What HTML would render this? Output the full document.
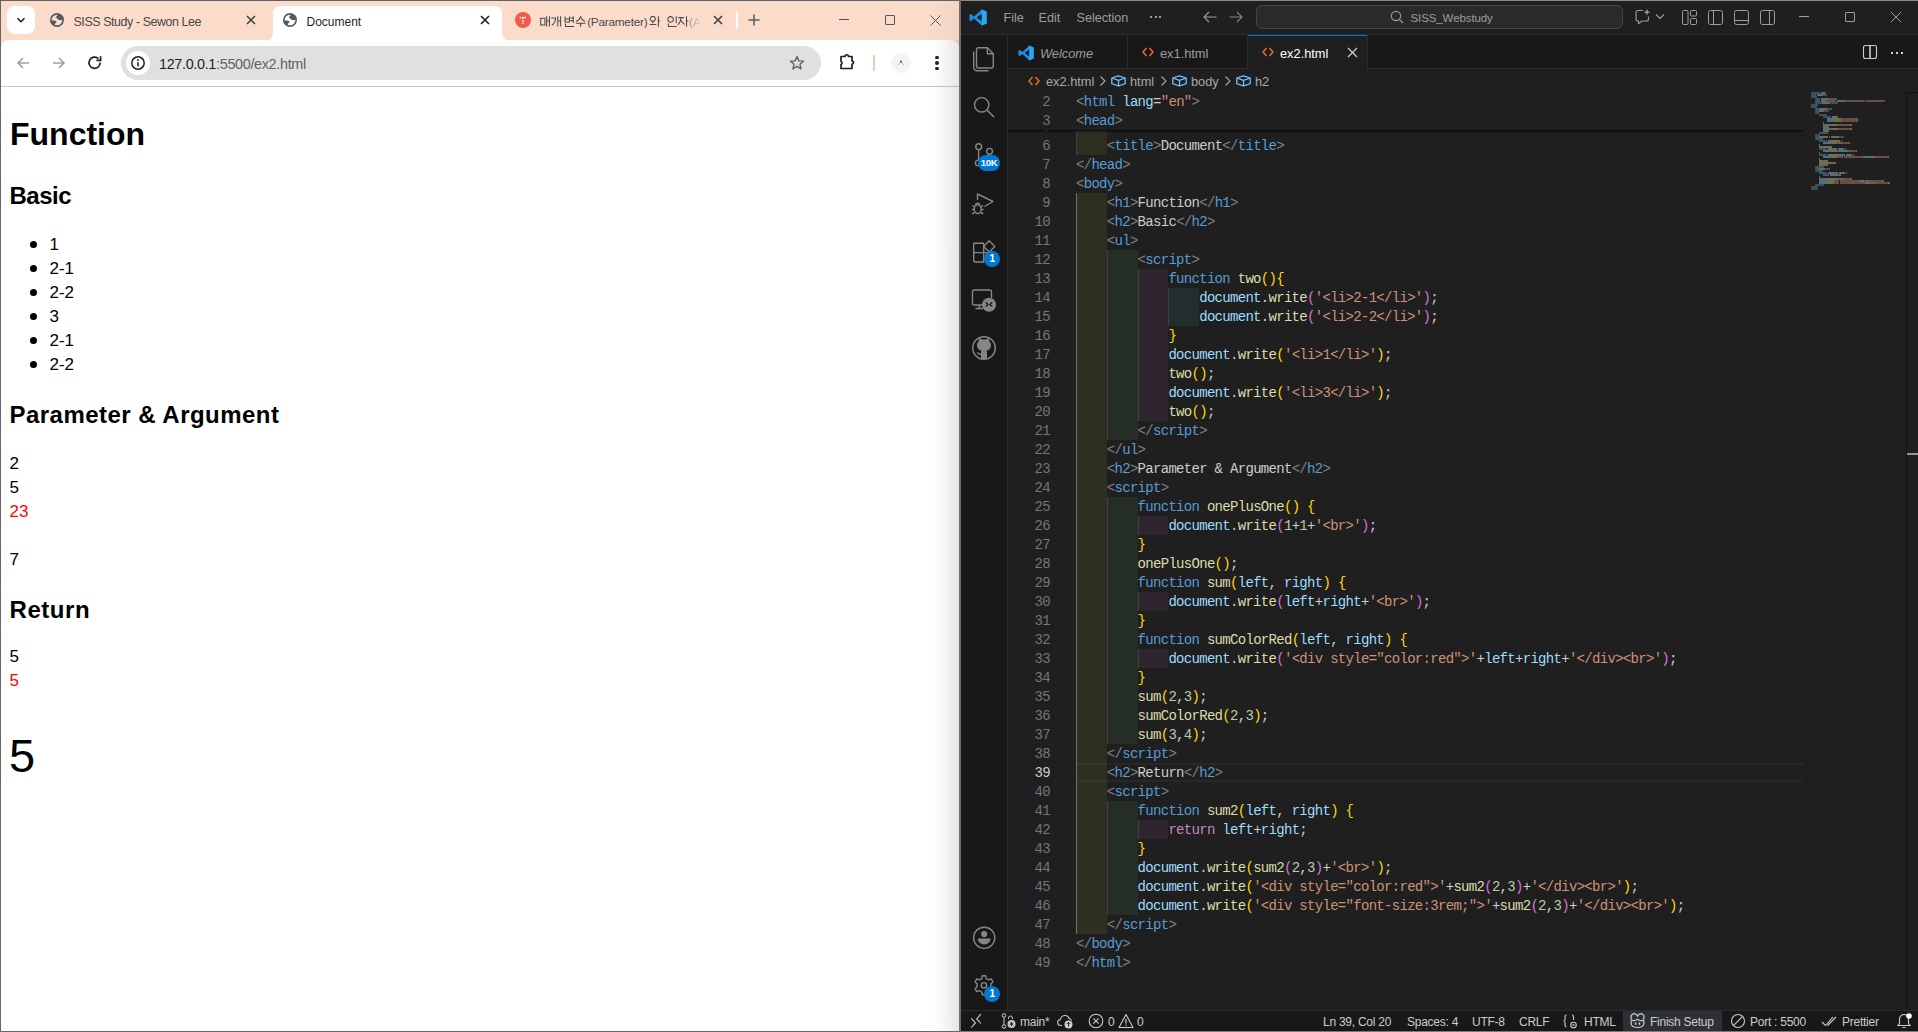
<!DOCTYPE html><html><head><meta charset="utf-8"><title>ex2</title>
<style>
html,body{margin:0;padding:0}
body{width:1918px;height:1032px;position:relative;overflow:hidden;background:#666666;font-family:"Liberation Sans",sans-serif}
.code{position:absolute;left:0;white-space:pre;font-family:"Liberation Mono",monospace;font-size:14px;letter-spacing:-0.7px;height:19px;line-height:19px;padding-top:1px;box-sizing:border-box}
.p{color:#808080}.t{color:#569cd6}.a{color:#9cdcfe}.x{color:#cccccc}.s{color:#ce9178}.k{color:#569cd6}.f{color:#dcdcaa}.v{color:#9cdcfe}.r{color:#c586c0}.n{color:#b5cea8}.y{color:#ffd700}.m{color:#da70d6}
</style></head><body>

<div style="position:absolute;left:1px;top:1px;width:958px;height:60px;background:#fbdccb;"></div>
<div style="position:absolute;left:1px;top:40px;width:958px;height:46px;background:#ffffff;border-radius:8px 8px 0 0"></div>
<div style="position:absolute;left:1px;top:86px;width:958px;height:1px;background:#c8c8c8;"></div>
<div style="position:absolute;left:1px;top:87px;width:958px;height:944px;background:#ffffff;"></div>
<div style="position:absolute;left:7px;top:6px;width:28px;height:28px;background:#ffffff;border-radius:8px"></div>
<svg style="position:absolute;left:15px;top:14px;" width="12" height="12" viewBox="0 0 12 12"><path d="M2.5 4.2 L6 7.7 L9.5 4.2" fill="none" stroke="#1f1f1f" stroke-width="1.6"/></svg>
<svg style="position:absolute;left:49px;top:12px;" width="16" height="16" viewBox="0 0 16 16"><circle cx="8" cy="8" r="6.15" fill="none" stroke="#545b64" stroke-width="1.6"/><path d="M9 2.6 C8 3.6 7 4.6 7.2 5.6 C7.4 6.6 9 7.4 10.3 8 C11.6 8.4 13.2 7.8 14.6 7.4 L14.2 4.6 L11.2 2 Z" fill="#545b64"/><path d="M1.6 8.4 C3.5 8.4 5.5 8.3 6.9 8.9 C7.9 9.4 7.6 10.2 6.6 10.9 C5.9 11.5 5.7 12.4 6 13.8 L2.8 12.2 L1.4 9.8 Z" fill="#545b64"/></svg>
<div style="position:absolute;left:73.5px;top:21.70px;line-height:0;font-family:'Liberation Sans',sans-serif;font-size:12.4px;font-weight:normal;color:#474747;white-space:pre;letter-spacing:-0.4px">SISS Study - Sewon Lee</div>
<svg style="position:absolute;left:246px;top:15px;" width="10" height="10" viewBox="0 0 10 10"><path d="M1 1 L9 9 M9 1 L1 9" stroke="#3c3c3c" stroke-width="1.5"/></svg>
<svg style="position:absolute;left:264px;top:6px" width="247" height="35" viewBox="0 0 247 35"><path d="M0 35 Q9 35 9 26 L9 8 Q9 0 17 0 L230 0 Q238 0 238 8 L238 26 Q238 35 247 35 Z" fill="#ffffff"/></svg>
<svg style="position:absolute;left:282px;top:12px;" width="16" height="16" viewBox="0 0 16 16"><circle cx="8" cy="8" r="6.15" fill="none" stroke="#545b64" stroke-width="1.6"/><path d="M9 2.6 C8 3.6 7 4.6 7.2 5.6 C7.4 6.6 9 7.4 10.3 8 C11.6 8.4 13.2 7.8 14.6 7.4 L14.2 4.6 L11.2 2 Z" fill="#545b64"/><path d="M1.6 8.4 C3.5 8.4 5.5 8.3 6.9 8.9 C7.9 9.4 7.6 10.2 6.6 10.9 C5.9 11.5 5.7 12.4 6 13.8 L2.8 12.2 L1.4 9.8 Z" fill="#545b64"/></svg>
<div style="position:absolute;left:306.5px;top:21.84px;line-height:0;font-family:'Liberation Sans',sans-serif;font-size:12px;font-weight:normal;color:#1f1f1f;white-space:pre;">Document</div>
<svg style="position:absolute;left:480px;top:15px;" width="10" height="10" viewBox="0 0 10 10"><path d="M1 1 L9 9 M9 1 L1 9" stroke="#1f1f1f" stroke-width="1.6"/></svg>
<svg style="position:absolute;left:515px;top:12px;" width="16" height="16" viewBox="0 0 16 16"><circle cx="8" cy="8" r="8" fill="#f25a4b"/><path d="M4.6 5.6 H11.4 M8 5.6 V11.8" stroke="#fff" stroke-width="1.6" stroke-dasharray="1.4 1"/></svg>
<svg style="position:absolute;left:535px;top:16px" width="170" height="12" viewBox="0 0 170 12"><path transform="translate(4.899999999999977 0)" d="M0.8 2.2 H5 V9 H0.8 Z M6.8 0.2 V10.6 M6.8 5 H9.2 M9.6 0.2 V10.6" fill="none" stroke="#4a4a4a" stroke-width="1.05"/><path transform="translate(16 0)" d="M0.4 2 H4.6 C4.6 5 3.4 7.5 0.8 9.2 M6.8 0.2 V10.6 M6.8 5 H9.2 M9.6 0.2 V10.6" fill="none" stroke="#4a4a4a" stroke-width="1.05"/><path transform="translate(29.299999999999955 0)" d="M0.8 0.4 V6 H5.2 V0.4 M0.8 3 H5.2 M9 0.2 V7 M6.2 2 H9 M6.2 4.6 H9 M1.2 7.4 V10.4 H9.8" fill="none" stroke="#4a4a4a" stroke-width="1.05"/><path transform="translate(40.60000000000002 0)" d="M5 0.4 C4.6 2.6 2.8 4.6 0.4 5.4 M5 0.4 C5.4 2.6 7.2 4.6 9.6 5.4 M0.2 7.2 H9.8 M5 7.2 V10.8" fill="none" stroke="#4a4a4a" stroke-width="1.05"/><path transform="translate(114.39999999999998 0)" d="M3.4 2.8 m-2.6 0 a2.6 2.4 0 1 0 5.2 0 a2.6 2.4 0 1 0 -5.2 0 M3.4 5.4 V7.6 M0.2 8.4 H7 M9 0.2 V10.8 M9 5 H10.6" fill="none" stroke="#4a4a4a" stroke-width="1.05"/><path transform="translate(132 0)" d="M3.6 3.4 m-2.8 0 a2.8 2.8 0 1 0 5.6 0 a2.8 2.8 0 1 0 -5.6 0 M9.2 0.2 V7.2 M1.4 7.6 V10.4 H9.8" fill="none" stroke="#4a4a4a" stroke-width="1.05"/><path transform="translate(142.70000000000005 0)" d="M0.6 1.6 H6.2 M3.4 1.6 C3.2 4.6 2 7.2 0.2 9 M3.6 4.4 C4.4 6 5.4 7.4 6.8 8.4 M8.8 0.2 V10.8 M8.8 5 H10.6" fill="none" stroke="#4a4a4a" stroke-width="1.05"/></svg>
<div style="position:absolute;left:587.2px;top:21.51px;line-height:0;font-family:'Liberation Sans',sans-serif;font-size:11.8px;font-weight:normal;color:#4a4a4a;white-space:pre;letter-spacing:-0.25px">(Parameter)</div>
<div style="position:absolute;left:688px;top:13px;width:14px;height:16px;overflow:hidden;-webkit-mask-image:linear-gradient(to right,rgba(0,0,0,0.6),transparent);mask-image:linear-gradient(to right,rgba(0,0,0,0.6),transparent)"><div style="position:absolute;left:1px;top:8.8px;line-height:0;font-size:11.8px;color:#4a4a4a;white-space:pre">(A</div></div>
<svg style="position:absolute;left:713px;top:15px;" width="10" height="10" viewBox="0 0 10 10"><path d="M1 1 L9 9 M9 1 L1 9" stroke="#3c3c3c" stroke-width="1.5"/></svg>
<div style="position:absolute;left:736px;top:12px;width:2px;height:16px;background:#ffffff;"></div>
<svg style="position:absolute;left:748px;top:14px;" width="12" height="12" viewBox="0 0 12 12"><path d="M6 0.5 V11.5 M0.5 6 H11.5" stroke="#5a5a5a" stroke-width="1.5"/></svg>
<div style="position:absolute;left:839px;top:19px;width:10px;height:1px;background:#555555;"></div>
<div style="position:absolute;left:885px;top:15px;width:10px;height:10px;background:transparent;border:1px solid #555555;box-sizing:border-box;border-radius:1px"></div>
<svg style="position:absolute;left:930px;top:15px;" width="11" height="11" viewBox="0 0 11 11"><path d="M0.5 0.5 L10.5 10.5 M10.5 0.5 L0.5 10.5" stroke="#555555" stroke-width="1"/></svg>
<svg style="position:absolute;left:15px;top:55px;" width="16" height="16" viewBox="0 0 16 16"><path d="M14 8 H3 M8 3 L3 8 L8 13" fill="none" stroke="#a0a0a0" stroke-width="1.6"/></svg>
<svg style="position:absolute;left:51px;top:55px;" width="16" height="16" viewBox="0 0 16 16"><path d="M2 8 H13 M8 3 L13 8 L8 13" fill="none" stroke="#a0a0a0" stroke-width="1.6"/></svg>
<svg style="position:absolute;left:87px;top:55px;" width="16" height="16" viewBox="0 0 16 16"><path d="M13.2 7.6 A5.6 5.6 0 1 1 11.4 3.6" fill="none" stroke="#1f1f1f" stroke-width="1.7"/><path d="M13.6 1.2 V5.4 H9.4" fill="none" stroke="#1f1f1f" stroke-width="1.7"/></svg>
<div style="position:absolute;left:121px;top:46px;width:700px;height:34px;background:#e0e0e0;border-radius:17px"></div>
<div style="position:absolute;left:126px;top:51px;width:24px;height:24px;background:#ffffff;border-radius:12px"></div>
<svg style="position:absolute;left:130px;top:55px;" width="16" height="16" viewBox="0 0 16 16"><circle cx="8" cy="8" r="6.2" fill="none" stroke="#1f1f1f" stroke-width="1.5"/><path d="M8 7.2 V11.2" stroke="#1f1f1f" stroke-width="1.6"/><circle cx="8" cy="5" r="0.95" fill="#1f1f1f"/></svg>
<div style="position:absolute;left:159px;top:63.51px;line-height:0;font-family:'Liberation Sans',sans-serif;font-size:14.4px;font-weight:normal;color:#1f1f1f;white-space:pre;letter-spacing:-0.33px"><span style="color:#1f1f1f">127.0.0.1</span><span style="color:#5f6368">:5500/ex2.html</span></div>
<svg style="position:absolute;left:789px;top:55px;" width="16" height="16" viewBox="0 0 16 16"><path d="M8 1.6 L9.9 5.9 L14.5 6.3 L11 9.3 L12.1 13.9 L8 11.4 L3.9 13.9 L5 9.3 L1.5 6.3 L6.1 5.9 Z" fill="none" stroke="#5f6368" stroke-width="1.4" stroke-linejoin="round"/></svg>
<svg style="position:absolute;left:838px;top:53px;" width="20" height="20" viewBox="0 0 20 20"><path d="M3 3.5 H7 A1.5 1.5 0 0 1 10.5 3.5 H14 V8 A1.5 1.5 0 0 1 14 11 V15.5 H3 V11.5 A1.6 1.6 0 0 0 3 8.5 Z" fill="none" stroke="#1f1f1f" stroke-width="1.7" stroke-linejoin="round"/></svg>
<div style="position:absolute;left:873px;top:55px;width:2px;height:16px;background:#f6c9ae;"></div>
<div style="position:absolute;left:891px;top:53px;width:20px;height:20px;background:#f4f4f4;border-radius:10px"></div>
<svg style="position:absolute;left:896px;top:58px;" width="10" height="10" viewBox="0 0 10 10"><path d="M2 7 L5 4 L8 7" fill="none" stroke="#c98a8a" stroke-width="0.8"/><circle cx="5" cy="3.5" r="1" fill="#8b3a3a"/></svg>
<div style="position:absolute;left:934.8px;top:55.6px;width:3.8px;height:3.8px;background:#1f1f1f;border-radius:2px"></div>
<div style="position:absolute;left:934.8px;top:61.1px;width:3.8px;height:3.8px;background:#1f1f1f;border-radius:2px"></div>
<div style="position:absolute;left:934.8px;top:66.6px;width:3.8px;height:3.8px;background:#1f1f1f;border-radius:2px"></div>
<div style="position:absolute;left:10px;top:133.91px;line-height:0;font-family:'Liberation Sans',sans-serif;font-size:32px;font-weight:bold;color:#000;white-space:pre;">Function</div>
<div style="position:absolute;left:9.5px;top:195.68px;line-height:0;font-family:'Liberation Sans',sans-serif;font-size:24px;font-weight:bold;color:#000;white-space:pre;letter-spacing:-0.5px">Basic</div>
<div style="position:absolute;left:29.5px;top:240.5px;width:7px;height:7px;background:#000;border-radius:4px"></div>
<div style="position:absolute;left:49.5px;top:245.11px;line-height:0;font-family:'Liberation Sans',sans-serif;font-size:17px;font-weight:normal;color:#000;white-space:pre;">1</div>
<div style="position:absolute;left:29.5px;top:264.5px;width:7px;height:7px;background:#000;border-radius:4px"></div>
<div style="position:absolute;left:49.5px;top:269.11px;line-height:0;font-family:'Liberation Sans',sans-serif;font-size:17px;font-weight:normal;color:#000;white-space:pre;">2-1</div>
<div style="position:absolute;left:29.5px;top:288.5px;width:7px;height:7px;background:#000;border-radius:4px"></div>
<div style="position:absolute;left:49.5px;top:293.11px;line-height:0;font-family:'Liberation Sans',sans-serif;font-size:17px;font-weight:normal;color:#000;white-space:pre;">2-2</div>
<div style="position:absolute;left:29.5px;top:312.5px;width:7px;height:7px;background:#000;border-radius:4px"></div>
<div style="position:absolute;left:49.5px;top:317.11px;line-height:0;font-family:'Liberation Sans',sans-serif;font-size:17px;font-weight:normal;color:#000;white-space:pre;">3</div>
<div style="position:absolute;left:29.5px;top:336.5px;width:7px;height:7px;background:#000;border-radius:4px"></div>
<div style="position:absolute;left:49.5px;top:341.11px;line-height:0;font-family:'Liberation Sans',sans-serif;font-size:17px;font-weight:normal;color:#000;white-space:pre;">2-1</div>
<div style="position:absolute;left:29.5px;top:360.5px;width:7px;height:7px;background:#000;border-radius:4px"></div>
<div style="position:absolute;left:49.5px;top:365.11px;line-height:0;font-family:'Liberation Sans',sans-serif;font-size:17px;font-weight:normal;color:#000;white-space:pre;">2-2</div>
<div style="position:absolute;left:9.5px;top:414.68px;line-height:0;font-family:'Liberation Sans',sans-serif;font-size:24px;font-weight:bold;color:#000;white-space:pre;letter-spacing:0.47px">Parameter &amp; Argument</div>
<div style="position:absolute;left:9.5px;top:464.11px;line-height:0;font-family:'Liberation Sans',sans-serif;font-size:17px;font-weight:normal;color:#000;white-space:pre;">2</div>
<div style="position:absolute;left:9.5px;top:488.11px;line-height:0;font-family:'Liberation Sans',sans-serif;font-size:17px;font-weight:normal;color:#000;white-space:pre;">5</div>
<div style="position:absolute;left:9.5px;top:512.11px;line-height:0;font-family:'Liberation Sans',sans-serif;font-size:17px;font-weight:normal;color:#ff0000;white-space:pre;">23</div>
<div style="position:absolute;left:9.5px;top:560.11px;line-height:0;font-family:'Liberation Sans',sans-serif;font-size:17px;font-weight:normal;color:#000;white-space:pre;">7</div>
<div style="position:absolute;left:9.5px;top:609.68px;line-height:0;font-family:'Liberation Sans',sans-serif;font-size:24px;font-weight:bold;color:#000;white-space:pre;letter-spacing:0.55px">Return</div>
<div style="position:absolute;left:9.5px;top:657.11px;line-height:0;font-family:'Liberation Sans',sans-serif;font-size:17px;font-weight:normal;color:#000;white-space:pre;">5</div>
<div style="position:absolute;left:9.5px;top:681.11px;line-height:0;font-family:'Liberation Sans',sans-serif;font-size:17px;font-weight:normal;color:#ff0000;white-space:pre;">5</div>
<div style="position:absolute;left:9px;top:755.71px;line-height:0;font-family:'Liberation Sans',sans-serif;font-size:47px;font-weight:normal;color:#000;white-space:pre;">5</div>
<div style="position:absolute;left:0px;top:0px;width:959px;height:1px;background:#60646a;"></div>
<div style="position:absolute;left:961px;top:0px;width:957px;height:1px;background:#8a8a8a;"></div>
<div style="position:absolute;left:925px;top:40px;width:34px;height:991px;background:linear-gradient(to right,rgba(0,0,0,0),rgba(0,0,0,0.02) 45%,rgba(0,0,0,0.1));"></div>
<div style="position:absolute;left:925px;top:1px;width:34px;height:39px;background:linear-gradient(to right,rgba(0,0,0,0),rgba(0,0,0,0.03));"></div>
<div style="position:absolute;left:959px;top:0px;width:2px;height:1032px;background:#6e6e6e;"></div>
<div style="position:absolute;left:961px;top:1px;width:957px;height:33px;background:#1f1f1f;"></div>
<div style="position:absolute;left:961px;top:34px;width:957px;height:1px;background:#2b2b2b;"></div>
<svg style="position:absolute;left:969px;top:9px;" width="18" height="17" viewBox="0 0 18 17"><path d="M12.8 0.4 L17.6 2.6 V14.4 L12.8 16.6 L5 9.6 L2 12 L0.4 11.2 V5.8 L2 5 L5 7.4 Z M12.8 4.8 L7.6 8.5 L12.8 12.2 Z" fill="#1a8ee8"/><path d="M12.8 0.4 L17.6 2.6 V14.4 L12.8 16.6 Z" fill="#27a8f0"/></svg>
<div style="position:absolute;left:1003.5px;top:17.63px;line-height:0;font-family:'Liberation Sans',sans-serif;font-size:12.6px;font-weight:normal;color:#9d9d9d;white-space:pre;">File</div>
<div style="position:absolute;left:1038.5px;top:17.63px;line-height:0;font-family:'Liberation Sans',sans-serif;font-size:12.6px;font-weight:normal;color:#9d9d9d;white-space:pre;">Edit</div>
<div style="position:absolute;left:1076.5px;top:17.63px;line-height:0;font-family:'Liberation Sans',sans-serif;font-size:12.6px;font-weight:normal;color:#9d9d9d;white-space:pre;">Selection</div>
<div style="position:absolute;left:1150px;top:16px;width:2px;height:2px;background:#9d9d9d;"></div>
<div style="position:absolute;left:1154.5px;top:16px;width:2px;height:2px;background:#9d9d9d;"></div>
<div style="position:absolute;left:1159px;top:16px;width:2px;height:2px;background:#9d9d9d;"></div>
<svg style="position:absolute;left:1202px;top:10px;" width="16" height="14" viewBox="0 0 16 14"><path d="M14.5 7 H2 M7 2 L2 7 L7 12" fill="none" stroke="#9d9d9d" stroke-width="1.1"/></svg>
<svg style="position:absolute;left:1228px;top:10px;" width="16" height="14" viewBox="0 0 16 14"><path d="M1.5 7 H14 M9 2 L14 7 L9 12" fill="none" stroke="#858585" stroke-width="1.1"/></svg>
<div style="position:absolute;left:1256px;top:5px;width:367px;height:24px;background:#2a2a2a;border:1px solid #454545;box-sizing:border-box;border-radius:6px"></div>
<svg style="position:absolute;left:1390px;top:10px;" width="14" height="14" viewBox="0 0 14 14"><circle cx="6" cy="6" r="4.6" fill="none" stroke="#9d9d9d" stroke-width="1.1"/><path d="M9.3 9.3 L13 13" stroke="#9d9d9d" stroke-width="1.1"/></svg>
<div style="position:absolute;left:1410.5px;top:18.02px;line-height:0;font-family:'Liberation Sans',sans-serif;font-size:11.5px;font-weight:normal;color:#9d9d9d;white-space:pre;letter-spacing:-0.1px">SISS_Webstudy</div>
<svg style="position:absolute;left:1634px;top:8px;" width="20" height="18" viewBox="0 0 20 18"><path d="M9 2.5 H4 A2 2 0 0 0 2 4.5 V11 A2 2 0 0 0 4 13 H4.5 V15.8 L8 13 H12.5 A2 2 0 0 0 14.5 11 V8.5" fill="none" stroke="#9d9d9d" stroke-width="1.1" stroke-linejoin="round"/><path d="M13 0.8 L13.9 3.3 L16.4 4.2 L13.9 5.1 L13 7.6 L12.1 5.1 L9.6 4.2 L12.1 3.3 Z" fill="#9d9d9d"/></svg>
<svg style="position:absolute;left:1655px;top:13px;" width="10" height="7" viewBox="0 0 10 7"><path d="M1 1.5 L5 5.5 L9 1.5" fill="none" stroke="#9d9d9d" stroke-width="1.1"/></svg>
<svg style="position:absolute;left:1682px;top:10px;" width="15" height="15" viewBox="0 0 15 15"><rect x="0.5" y="0.5" width="5.5" height="14" rx="1" fill="none" stroke="#9d9d9d"/><rect x="8.5" y="0.5" width="6" height="5.5" rx="1" fill="none" stroke="#9d9d9d"/><rect x="8.5" y="8.5" width="6" height="6" rx="1" fill="none" stroke="#9d9d9d"/></svg>
<svg style="position:absolute;left:1708px;top:10px;" width="15" height="15" viewBox="0 0 15 15"><rect x="0.5" y="0.5" width="14" height="14" rx="2" fill="none" stroke="#9d9d9d"/><path d="M5.5 0.5 V14.5" stroke="#9d9d9d"/></svg>
<svg style="position:absolute;left:1734px;top:10px;" width="15" height="15" viewBox="0 0 15 15"><rect x="0.5" y="0.5" width="14" height="14" rx="2" fill="none" stroke="#9d9d9d"/><path d="M0.5 10.5 H14.5" stroke="#9d9d9d"/></svg>
<svg style="position:absolute;left:1760px;top:10px;" width="15" height="15" viewBox="0 0 15 15"><rect x="0.5" y="0.5" width="14" height="14" rx="2" fill="none" stroke="#9d9d9d"/><path d="M9.5 0.5 V14.5" stroke="#9d9d9d"/></svg>
<div style="position:absolute;left:1799px;top:16px;width:10px;height:1px;background:#9d9d9d;"></div>
<div style="position:absolute;left:1845px;top:12px;width:10px;height:10px;background:transparent;border:1px solid #9d9d9d;box-sizing:border-box;border-radius:1px"></div>
<svg style="position:absolute;left:1890px;top:11px;" width="12" height="12" viewBox="0 0 12 12"><path d="M0.8 0.8 L11.2 11.2 M11.2 0.8 L0.8 11.2" stroke="#9d9d9d" stroke-width="1"/></svg>
<div style="position:absolute;left:961px;top:35px;width:46px;height:975px;background:#181818;"></div>
<div style="position:absolute;left:1007px;top:35px;width:1px;height:975px;background:#2b2b2b;"></div>
<svg style="position:absolute;left:961px;top:0px" width="46" height="1032" viewBox="961 0 46 1032"><g fill="none" stroke="#868686" stroke-width="1.4" stroke-linejoin="round"><path d="M978.5 47.7 H987.3 L993.3 53.7 V66 A2 2 0 0 1 991.3 68 H978.5 A2 2 0 0 1 976.5 66 V49.7 A2 2 0 0 1 978.5 47.7 Z"/><path d="M987.3 47.7 V53.7 H993.3"/><path d="M973.7 51.5 V67.5 A3.3 3.3 0 0 0 977 70.8 H988.5"/><circle cx="981.7" cy="104.8" r="7.2"/><path d="M986.9 110 L994.2 117.3" stroke-width="1.6"/><circle cx="978.7" cy="146.7" r="2.9"/><circle cx="989.6" cy="151.3" r="2.9"/><circle cx="978.3" cy="163" r="2.9"/><path d="M978.6 149.6 V160.1"/><path d="M989.6 154.2 C989.6 158 981 157 978.8 160.3"/><path d="M977.5 200 V194 L993 201.5 L984.5 206.5"/><ellipse cx="977.7" cy="209.2" rx="3.4" ry="4.3"/><path d="M972.2 205.5 L974.5 206.8 M971.8 209.5 H974.3 M972.2 213.8 L974.5 212.3 M983.2 205.5 L980.9 206.8 M983.6 209.5 H981.1 M983.2 213.8 L980.9 212.3 M975.5 205.5 A2.2 2.2 0 0 1 979.9 205.5"/><path d="M973.7 243.2 H983.7 V262 H975.7 A2 2 0 0 1 973.7 260 Z M973.7 252.6 H983.7 M983.7 252.6 H992"/><path d="M989.2 240.8 L994.8 246.4 L989.2 252 L983.6 246.4 Z"/><path d="M986.5 305 H974.5 A2 2 0 0 1 972.5 303 V292 A2 2 0 0 1 974.5 290 H989.5 A2 2 0 0 1 991.5 292 V298"/><path d="M979.5 305 V308.5 M975.5 308.5 H983"/><circle cx="984.2" cy="937.8" r="10.6"/><path d="M982.3 975.8 H985.7 L986.3 978.6 L988.6 979.9 L991.3 979 L993 981.9 L990.9 983.8 V986.8 L993 988.7 L991.3 991.6 L988.6 990.7 L986.3 992 L985.7 994.8 H982.3 L981.7 992 L979.4 990.7 L976.7 991.6 L975 988.7 L977.1 986.8 V983.8 L975 981.9 L976.7 979 L979.4 979.9 L981.7 978.6 Z"/><circle cx="984" cy="985.3" r="2.7"/></g><circle cx="989" cy="304.8" r="7" fill="#868686"/><path d="M985.8 302.2 L988 304.4 L985.8 306.6 M992.2 302.2 L990 304.4 L992.2 306.6" fill="none" stroke="#181818" stroke-width="1.3"/><circle cx="984" cy="348" r="11.3" fill="none" stroke="#868686" stroke-width="1.4"/><path d="M978.6 341.5 L979.3 337.8 L982.2 339.6 A8 8 0 0 1 985.8 339.6 L988.7 337.8 L989.4 341.5 C990.6 342.7 991 344 991 345.2 C991 348.6 988.8 350.4 986.2 350.8 C986.8 351.3 987 352 987 353 V359 H981 V355 C979 355.2 977.6 354.4 976.8 352.5 L978.2 352.3 C978.8 353.4 979.8 353.6 981 353.4 C981 352 981.2 351.4 981.8 350.8 C979.2 350.4 977 348.6 977 345.2 C977 344 977.4 342.7 978.6 341.5 Z" fill="#868686"/><circle cx="984.2" cy="934" r="3.1" fill="#868686"/><path d="M977.8 938.6 H990.6 A6.4 5.8 0 0 1 977.8 938.6 Z" fill="#868686"/></svg>
<div style="position:absolute;left:978.1px;top:155px;width:22px;height:16px;border-radius:8px;background:#0078d4;color:#fff;font-size:9.5px;font-weight:bold;line-height:16px;text-align:center;letter-spacing:-0.3px">10K</div>
<div style="position:absolute;left:984.1px;top:251.3px;width:16px;height:16px;border-radius:8px;background:#0078d4;color:#fff;font-size:10px;font-weight:bold;line-height:16px;text-align:center;letter-spacing:-0.3px">1</div>
<div style="position:absolute;left:984.1px;top:986.1px;width:16px;height:16px;border-radius:8px;background:#0078d4;color:#fff;font-size:10px;font-weight:bold;line-height:16px;text-align:center;letter-spacing:-0.3px">1</div>
<div style="position:absolute;left:1008px;top:35px;width:910px;height:34px;background:#181818;"></div>
<div style="position:absolute;left:1008px;top:68px;width:910px;height:1px;background:#2b2b2b;"></div>
<div style="position:absolute;left:1127px;top:35px;width:1px;height:34px;background:#2b2b2b;"></div>
<svg style="position:absolute;left:1018px;top:45px;" width="16" height="16" viewBox="0 0 16 16"><path d="M11.4 0.4 L15.6 2.4 V13.6 L11.4 15.6 L4.4 9 L1.8 11 L0.4 10.3 V5.7 L1.8 5 L4.4 7 Z M11.4 4.4 L6.8 8 L11.4 11.6 Z" fill="#1a8ee8"/><path d="M11.4 0.4 L15.6 2.4 V13.6 L11.4 15.6 Z" fill="#27a8f0"/></svg>
<div style="position:absolute;left:1040px;top:53.56px;line-height:0;font-family:'Liberation Sans',sans-serif;font-size:12.8px;font-weight:normal;color:#9d9d9d;white-space:pre;font-style:italic">Welcome</div>
<div style="position:absolute;left:1247px;top:35px;width:1px;height:34px;background:#2b2b2b;"></div>
<svg style="position:absolute;left:1142px;top:46px;" width="12" height="12" viewBox="0 0 12 12"><path d="M4.5 2 L1 6 L4.5 10 M7.5 2 L11 6 L7.5 10" fill="none" stroke="#e8652c" stroke-width="1.6"/></svg>
<div style="position:absolute;left:1160px;top:53.56px;line-height:0;font-family:'Liberation Sans',sans-serif;font-size:12.8px;font-weight:normal;color:#9d9d9d;white-space:pre;">ex1.html</div>
<div style="position:absolute;left:1248px;top:35px;width:119px;height:34px;background:#1f1f1f;"></div>
<div style="position:absolute;left:1248px;top:35px;width:119px;height:1px;background:#0078d4;"></div>
<div style="position:absolute;left:1367px;top:35px;width:1px;height:34px;background:#2b2b2b;"></div>
<svg style="position:absolute;left:1262px;top:46px;" width="12" height="12" viewBox="0 0 12 12"><path d="M4.5 2 L1 6 L4.5 10 M7.5 2 L11 6 L7.5 10" fill="none" stroke="#e8652c" stroke-width="1.6"/></svg>
<div style="position:absolute;left:1280px;top:53.56px;line-height:0;font-family:'Liberation Sans',sans-serif;font-size:12.8px;font-weight:normal;color:#ffffff;white-space:pre;">ex2.html</div>
<svg style="position:absolute;left:1347px;top:47px;" width="11" height="11" viewBox="0 0 11 11"><path d="M1 1 L10 10 M10 1 L1 10" stroke="#cccccc" stroke-width="1.3"/></svg>
<svg style="position:absolute;left:1862px;top:44px;" width="16" height="16" viewBox="0 0 16 16"><rect x="1.5" y="1.5" width="13" height="13" rx="2" fill="none" stroke="#cccccc" stroke-width="1.1"/><path d="M8 1.5 V14.5" stroke="#cccccc" stroke-width="1.6"/></svg>
<div style="position:absolute;left:1891px;top:52px;width:2px;height:2px;background:#cccccc;"></div>
<div style="position:absolute;left:1896px;top:52px;width:2px;height:2px;background:#cccccc;"></div>
<div style="position:absolute;left:1901px;top:52px;width:2px;height:2px;background:#cccccc;"></div>
<div style="position:absolute;left:1008px;top:69px;width:910px;height:23px;background:#1f1f1f;"></div>
<svg style="position:absolute;left:1028px;top:75px;" width="12" height="12" viewBox="0 0 12 12"><path d="M4.5 2 L1 6 L4.5 10 M7.5 2 L11 6 L7.5 10" fill="none" stroke="#e8652c" stroke-width="1.6"/></svg>
<div style="position:absolute;left:1046px;top:81.56px;line-height:0;font-family:'Liberation Sans',sans-serif;font-size:12.8px;font-weight:normal;color:#a9a9a9;white-space:pre;">ex2.html</div>
<svg style="position:absolute;left:1099px;top:75px;" width="8" height="12" viewBox="0 0 8 12"><path d="M1.5 1.5 L6 6 L1.5 10.5" fill="none" stroke="#a9a9a9" stroke-width="1.1"/></svg>
<svg style="position:absolute;left:1111px;top:75px;" width="16" height="12" viewBox="0 0 16 12"><path d="M7.5 0.8 L14.2 3 V8.6 L7.5 11 L0.8 8.6 V3 Z M0.8 3 L7.5 5.4 L14.2 3 M7.5 5.4 V11" fill="none" stroke="#75beff" stroke-width="1.3" stroke-linejoin="round"/></svg>
<div style="position:absolute;left:1130px;top:81.56px;line-height:0;font-family:'Liberation Sans',sans-serif;font-size:12.8px;font-weight:normal;color:#a9a9a9;white-space:pre;">html</div>
<svg style="position:absolute;left:1160px;top:75px;" width="8" height="12" viewBox="0 0 8 12"><path d="M1.5 1.5 L6 6 L1.5 10.5" fill="none" stroke="#a9a9a9" stroke-width="1.1"/></svg>
<svg style="position:absolute;left:1172px;top:75px;" width="16" height="12" viewBox="0 0 16 12"><path d="M7.5 0.8 L14.2 3 V8.6 L7.5 11 L0.8 8.6 V3 Z M0.8 3 L7.5 5.4 L14.2 3 M7.5 5.4 V11" fill="none" stroke="#75beff" stroke-width="1.3" stroke-linejoin="round"/></svg>
<div style="position:absolute;left:1191px;top:81.56px;line-height:0;font-family:'Liberation Sans',sans-serif;font-size:12.8px;font-weight:normal;color:#a9a9a9;white-space:pre;">body</div>
<svg style="position:absolute;left:1224px;top:75px;" width="8" height="12" viewBox="0 0 8 12"><path d="M1.5 1.5 L6 6 L1.5 10.5" fill="none" stroke="#a9a9a9" stroke-width="1.1"/></svg>
<svg style="position:absolute;left:1236px;top:75px;" width="16" height="12" viewBox="0 0 16 12"><path d="M7.5 0.8 L14.2 3 V8.6 L7.5 11 L0.8 8.6 V3 Z M0.8 3 L7.5 5.4 L14.2 3 M7.5 5.4 V11" fill="none" stroke="#75beff" stroke-width="1.3" stroke-linejoin="round"/></svg>
<div style="position:absolute;left:1255px;top:81.56px;line-height:0;font-family:'Liberation Sans',sans-serif;font-size:12.8px;font-weight:normal;color:#a9a9a9;white-space:pre;">h2</div>
<div style="position:absolute;left:1008px;top:92px;width:910px;height:918px;background:#1f1f1f;overflow:hidden">
<div style="position:absolute;left:68px;top:670.5px;width:727px;height:19px;box-sizing:border-box;border-top:2px solid #282828;border-bottom:2px solid #282828"></div>
<div class="code" style="top:-51.5px;left:0;width:42px;text-align:right;color:#6e7681">1</div>
<div class="code" style="top:-32.5px;left:0;width:42px;text-align:right;color:#6e7681">2</div>
<div class="code" style="top:-32.5px;left:68.00px"><span class="p">&lt;</span><span class="t">html</span><span class="x"> </span><span class="a">lang</span><span class="x">=</span><span class="s">&quot;en&quot;</span><span class="p">&gt;</span></div>
<div class="code" style="top:-13.5px;left:0;width:42px;text-align:right;color:#6e7681">3</div>
<div class="code" style="top:-13.5px;left:68.00px"><span class="p">&lt;</span><span class="t">head</span><span class="p">&gt;</span></div>
<div style="position:absolute;left:68.00px;top:5.5px;width:30.80px;height:19px;background:rgba(255,255,64,0.07)"></div>
<div style="position:absolute;left:68.00px;top:5.5px;width:1px;height:19px;background:#404040"></div>
<div class="code" style="top:5.5px;left:0;width:42px;text-align:right;color:#6e7681">4</div>
<div style="position:absolute;left:68.00px;top:24.5px;width:30.80px;height:19px;background:rgba(255,255,64,0.07)"></div>
<div style="position:absolute;left:68.00px;top:24.5px;width:1px;height:19px;background:#404040"></div>
<div class="code" style="top:24.5px;left:0;width:42px;text-align:right;color:#6e7681">5</div>
<div style="position:absolute;left:68.00px;top:43.5px;width:30.80px;height:19px;background:rgba(255,255,64,0.07)"></div>
<div style="position:absolute;left:68.00px;top:43.5px;width:1px;height:19px;background:#404040"></div>
<div class="code" style="top:43.5px;left:0;width:42px;text-align:right;color:#6e7681">6</div>
<div class="code" style="top:43.5px;left:98.80px"><span class="p">&lt;</span><span class="t">title</span><span class="p">&gt;</span><span class="x">Document</span><span class="p">&lt;/</span><span class="t">title</span><span class="p">&gt;</span></div>
<div class="code" style="top:62.5px;left:0;width:42px;text-align:right;color:#6e7681">7</div>
<div class="code" style="top:62.5px;left:68.00px"><span class="p">&lt;/</span><span class="t">head</span><span class="p">&gt;</span></div>
<div class="code" style="top:81.5px;left:0;width:42px;text-align:right;color:#6e7681">8</div>
<div class="code" style="top:81.5px;left:68.00px"><span class="p">&lt;</span><span class="t">body</span><span class="p">&gt;</span></div>
<div style="position:absolute;left:68.00px;top:100.5px;width:30.80px;height:19px;background:rgba(255,255,64,0.07)"></div>
<div style="position:absolute;left:68.00px;top:100.5px;width:1px;height:19px;background:#707070"></div>
<div class="code" style="top:100.5px;left:0;width:42px;text-align:right;color:#6e7681">9</div>
<div class="code" style="top:100.5px;left:98.80px"><span class="p">&lt;</span><span class="t">h1</span><span class="p">&gt;</span><span class="x">Function</span><span class="p">&lt;/</span><span class="t">h1</span><span class="p">&gt;</span></div>
<div style="position:absolute;left:68.00px;top:119.5px;width:30.80px;height:19px;background:rgba(255,255,64,0.07)"></div>
<div style="position:absolute;left:68.00px;top:119.5px;width:1px;height:19px;background:#707070"></div>
<div class="code" style="top:119.5px;left:0;width:42px;text-align:right;color:#6e7681">10</div>
<div class="code" style="top:119.5px;left:98.80px"><span class="p">&lt;</span><span class="t">h2</span><span class="p">&gt;</span><span class="x">Basic</span><span class="p">&lt;/</span><span class="t">h2</span><span class="p">&gt;</span></div>
<div style="position:absolute;left:68.00px;top:138.5px;width:30.80px;height:19px;background:rgba(255,255,64,0.07)"></div>
<div style="position:absolute;left:68.00px;top:138.5px;width:1px;height:19px;background:#707070"></div>
<div class="code" style="top:138.5px;left:0;width:42px;text-align:right;color:#6e7681">11</div>
<div class="code" style="top:138.5px;left:98.80px"><span class="p">&lt;</span><span class="t">ul</span><span class="p">&gt;</span></div>
<div style="position:absolute;left:68.00px;top:157.5px;width:30.80px;height:19px;background:rgba(255,255,64,0.07)"></div>
<div style="position:absolute;left:98.80px;top:157.5px;width:30.80px;height:19px;background:rgba(127,255,127,0.07)"></div>
<div style="position:absolute;left:68.00px;top:157.5px;width:1px;height:19px;background:#707070"></div>
<div style="position:absolute;left:98.80px;top:157.5px;width:1px;height:19px;background:#404040"></div>
<div class="code" style="top:157.5px;left:0;width:42px;text-align:right;color:#6e7681">12</div>
<div class="code" style="top:157.5px;left:129.60px"><span class="p">&lt;</span><span class="t">script</span><span class="p">&gt;</span></div>
<div style="position:absolute;left:68.00px;top:176.5px;width:30.80px;height:19px;background:rgba(255,255,64,0.07)"></div>
<div style="position:absolute;left:98.80px;top:176.5px;width:30.80px;height:19px;background:rgba(127,255,127,0.07)"></div>
<div style="position:absolute;left:129.60px;top:176.5px;width:30.80px;height:19px;background:rgba(255,127,255,0.07)"></div>
<div style="position:absolute;left:68.00px;top:176.5px;width:1px;height:19px;background:#707070"></div>
<div style="position:absolute;left:98.80px;top:176.5px;width:1px;height:19px;background:#404040"></div>
<div style="position:absolute;left:129.60px;top:176.5px;width:1px;height:19px;background:#404040"></div>
<div class="code" style="top:176.5px;left:0;width:42px;text-align:right;color:#6e7681">13</div>
<div class="code" style="top:176.5px;left:160.40px"><span class="k">function</span><span class="x"> </span><span class="f">two</span><span class="y">(){</span></div>
<div style="position:absolute;left:68.00px;top:195.5px;width:30.80px;height:19px;background:rgba(255,255,64,0.07)"></div>
<div style="position:absolute;left:98.80px;top:195.5px;width:30.80px;height:19px;background:rgba(127,255,127,0.07)"></div>
<div style="position:absolute;left:129.60px;top:195.5px;width:30.80px;height:19px;background:rgba(255,127,255,0.07)"></div>
<div style="position:absolute;left:160.40px;top:195.5px;width:30.80px;height:19px;background:rgba(79,236,236,0.07)"></div>
<div style="position:absolute;left:68.00px;top:195.5px;width:1px;height:19px;background:#707070"></div>
<div style="position:absolute;left:98.80px;top:195.5px;width:1px;height:19px;background:#404040"></div>
<div style="position:absolute;left:129.60px;top:195.5px;width:1px;height:19px;background:#404040"></div>
<div style="position:absolute;left:160.40px;top:195.5px;width:1px;height:19px;background:#404040"></div>
<div class="code" style="top:195.5px;left:0;width:42px;text-align:right;color:#6e7681">14</div>
<div class="code" style="top:195.5px;left:191.20px"><span class="v">document</span><span class="x">.</span><span class="f">write</span><span class="m">(</span><span class="s">&#x27;&lt;li&gt;2-1&lt;/li&gt;&#x27;</span><span class="m">)</span><span class="x">;</span></div>
<div style="position:absolute;left:68.00px;top:214.5px;width:30.80px;height:19px;background:rgba(255,255,64,0.07)"></div>
<div style="position:absolute;left:98.80px;top:214.5px;width:30.80px;height:19px;background:rgba(127,255,127,0.07)"></div>
<div style="position:absolute;left:129.60px;top:214.5px;width:30.80px;height:19px;background:rgba(255,127,255,0.07)"></div>
<div style="position:absolute;left:160.40px;top:214.5px;width:30.80px;height:19px;background:rgba(79,236,236,0.07)"></div>
<div style="position:absolute;left:68.00px;top:214.5px;width:1px;height:19px;background:#707070"></div>
<div style="position:absolute;left:98.80px;top:214.5px;width:1px;height:19px;background:#404040"></div>
<div style="position:absolute;left:129.60px;top:214.5px;width:1px;height:19px;background:#404040"></div>
<div style="position:absolute;left:160.40px;top:214.5px;width:1px;height:19px;background:#404040"></div>
<div class="code" style="top:214.5px;left:0;width:42px;text-align:right;color:#6e7681">15</div>
<div class="code" style="top:214.5px;left:191.20px"><span class="v">document</span><span class="x">.</span><span class="f">write</span><span class="m">(</span><span class="s">&#x27;&lt;li&gt;2-2&lt;/li&gt;&#x27;</span><span class="m">)</span><span class="x">;</span></div>
<div style="position:absolute;left:68.00px;top:233.5px;width:30.80px;height:19px;background:rgba(255,255,64,0.07)"></div>
<div style="position:absolute;left:98.80px;top:233.5px;width:30.80px;height:19px;background:rgba(127,255,127,0.07)"></div>
<div style="position:absolute;left:129.60px;top:233.5px;width:30.80px;height:19px;background:rgba(255,127,255,0.07)"></div>
<div style="position:absolute;left:68.00px;top:233.5px;width:1px;height:19px;background:#707070"></div>
<div style="position:absolute;left:98.80px;top:233.5px;width:1px;height:19px;background:#404040"></div>
<div style="position:absolute;left:129.60px;top:233.5px;width:1px;height:19px;background:#404040"></div>
<div class="code" style="top:233.5px;left:0;width:42px;text-align:right;color:#6e7681">16</div>
<div class="code" style="top:233.5px;left:160.40px"><span class="y">}</span></div>
<div style="position:absolute;left:68.00px;top:252.5px;width:30.80px;height:19px;background:rgba(255,255,64,0.07)"></div>
<div style="position:absolute;left:98.80px;top:252.5px;width:30.80px;height:19px;background:rgba(127,255,127,0.07)"></div>
<div style="position:absolute;left:129.60px;top:252.5px;width:30.80px;height:19px;background:rgba(255,127,255,0.07)"></div>
<div style="position:absolute;left:68.00px;top:252.5px;width:1px;height:19px;background:#707070"></div>
<div style="position:absolute;left:98.80px;top:252.5px;width:1px;height:19px;background:#404040"></div>
<div style="position:absolute;left:129.60px;top:252.5px;width:1px;height:19px;background:#404040"></div>
<div class="code" style="top:252.5px;left:0;width:42px;text-align:right;color:#6e7681">17</div>
<div class="code" style="top:252.5px;left:160.40px"><span class="v">document</span><span class="x">.</span><span class="f">write</span><span class="y">(</span><span class="s">&#x27;&lt;li&gt;1&lt;/li&gt;&#x27;</span><span class="y">)</span><span class="x">;</span></div>
<div style="position:absolute;left:68.00px;top:271.5px;width:30.80px;height:19px;background:rgba(255,255,64,0.07)"></div>
<div style="position:absolute;left:98.80px;top:271.5px;width:30.80px;height:19px;background:rgba(127,255,127,0.07)"></div>
<div style="position:absolute;left:129.60px;top:271.5px;width:30.80px;height:19px;background:rgba(255,127,255,0.07)"></div>
<div style="position:absolute;left:68.00px;top:271.5px;width:1px;height:19px;background:#707070"></div>
<div style="position:absolute;left:98.80px;top:271.5px;width:1px;height:19px;background:#404040"></div>
<div style="position:absolute;left:129.60px;top:271.5px;width:1px;height:19px;background:#404040"></div>
<div class="code" style="top:271.5px;left:0;width:42px;text-align:right;color:#6e7681">18</div>
<div class="code" style="top:271.5px;left:160.40px"><span class="f">two</span><span class="y">()</span><span class="x">;</span></div>
<div style="position:absolute;left:68.00px;top:290.5px;width:30.80px;height:19px;background:rgba(255,255,64,0.07)"></div>
<div style="position:absolute;left:98.80px;top:290.5px;width:30.80px;height:19px;background:rgba(127,255,127,0.07)"></div>
<div style="position:absolute;left:129.60px;top:290.5px;width:30.80px;height:19px;background:rgba(255,127,255,0.07)"></div>
<div style="position:absolute;left:68.00px;top:290.5px;width:1px;height:19px;background:#707070"></div>
<div style="position:absolute;left:98.80px;top:290.5px;width:1px;height:19px;background:#404040"></div>
<div style="position:absolute;left:129.60px;top:290.5px;width:1px;height:19px;background:#404040"></div>
<div class="code" style="top:290.5px;left:0;width:42px;text-align:right;color:#6e7681">19</div>
<div class="code" style="top:290.5px;left:160.40px"><span class="v">document</span><span class="x">.</span><span class="f">write</span><span class="y">(</span><span class="s">&#x27;&lt;li&gt;3&lt;/li&gt;&#x27;</span><span class="y">)</span><span class="x">;</span></div>
<div style="position:absolute;left:68.00px;top:309.5px;width:30.80px;height:19px;background:rgba(255,255,64,0.07)"></div>
<div style="position:absolute;left:98.80px;top:309.5px;width:30.80px;height:19px;background:rgba(127,255,127,0.07)"></div>
<div style="position:absolute;left:129.60px;top:309.5px;width:30.80px;height:19px;background:rgba(255,127,255,0.07)"></div>
<div style="position:absolute;left:68.00px;top:309.5px;width:1px;height:19px;background:#707070"></div>
<div style="position:absolute;left:98.80px;top:309.5px;width:1px;height:19px;background:#404040"></div>
<div style="position:absolute;left:129.60px;top:309.5px;width:1px;height:19px;background:#404040"></div>
<div class="code" style="top:309.5px;left:0;width:42px;text-align:right;color:#6e7681">20</div>
<div class="code" style="top:309.5px;left:160.40px"><span class="f">two</span><span class="y">()</span><span class="x">;</span></div>
<div style="position:absolute;left:68.00px;top:328.5px;width:30.80px;height:19px;background:rgba(255,255,64,0.07)"></div>
<div style="position:absolute;left:98.80px;top:328.5px;width:30.80px;height:19px;background:rgba(127,255,127,0.07)"></div>
<div style="position:absolute;left:68.00px;top:328.5px;width:1px;height:19px;background:#707070"></div>
<div style="position:absolute;left:98.80px;top:328.5px;width:1px;height:19px;background:#404040"></div>
<div class="code" style="top:328.5px;left:0;width:42px;text-align:right;color:#6e7681">21</div>
<div class="code" style="top:328.5px;left:129.60px"><span class="p">&lt;/</span><span class="t">script</span><span class="p">&gt;</span></div>
<div style="position:absolute;left:68.00px;top:347.5px;width:30.80px;height:19px;background:rgba(255,255,64,0.07)"></div>
<div style="position:absolute;left:68.00px;top:347.5px;width:1px;height:19px;background:#707070"></div>
<div class="code" style="top:347.5px;left:0;width:42px;text-align:right;color:#6e7681">22</div>
<div class="code" style="top:347.5px;left:98.80px"><span class="p">&lt;/</span><span class="t">ul</span><span class="p">&gt;</span></div>
<div style="position:absolute;left:68.00px;top:366.5px;width:30.80px;height:19px;background:rgba(255,255,64,0.07)"></div>
<div style="position:absolute;left:68.00px;top:366.5px;width:1px;height:19px;background:#707070"></div>
<div class="code" style="top:366.5px;left:0;width:42px;text-align:right;color:#6e7681">23</div>
<div class="code" style="top:366.5px;left:98.80px"><span class="p">&lt;</span><span class="t">h2</span><span class="p">&gt;</span><span class="x">Parameter &amp; Argument</span><span class="p">&lt;/</span><span class="t">h2</span><span class="p">&gt;</span></div>
<div style="position:absolute;left:68.00px;top:385.5px;width:30.80px;height:19px;background:rgba(255,255,64,0.07)"></div>
<div style="position:absolute;left:68.00px;top:385.5px;width:1px;height:19px;background:#707070"></div>
<div class="code" style="top:385.5px;left:0;width:42px;text-align:right;color:#6e7681">24</div>
<div class="code" style="top:385.5px;left:98.80px"><span class="p">&lt;</span><span class="t">script</span><span class="p">&gt;</span></div>
<div style="position:absolute;left:68.00px;top:404.5px;width:30.80px;height:19px;background:rgba(255,255,64,0.07)"></div>
<div style="position:absolute;left:98.80px;top:404.5px;width:30.80px;height:19px;background:rgba(127,255,127,0.07)"></div>
<div style="position:absolute;left:68.00px;top:404.5px;width:1px;height:19px;background:#707070"></div>
<div style="position:absolute;left:98.80px;top:404.5px;width:1px;height:19px;background:#404040"></div>
<div class="code" style="top:404.5px;left:0;width:42px;text-align:right;color:#6e7681">25</div>
<div class="code" style="top:404.5px;left:129.60px"><span class="k">function</span><span class="x"> </span><span class="f">onePlusOne</span><span class="y">()</span><span class="x"> </span><span class="y">{</span></div>
<div style="position:absolute;left:68.00px;top:423.5px;width:30.80px;height:19px;background:rgba(255,255,64,0.07)"></div>
<div style="position:absolute;left:98.80px;top:423.5px;width:30.80px;height:19px;background:rgba(127,255,127,0.07)"></div>
<div style="position:absolute;left:129.60px;top:423.5px;width:30.80px;height:19px;background:rgba(255,127,255,0.07)"></div>
<div style="position:absolute;left:68.00px;top:423.5px;width:1px;height:19px;background:#707070"></div>
<div style="position:absolute;left:98.80px;top:423.5px;width:1px;height:19px;background:#404040"></div>
<div style="position:absolute;left:129.60px;top:423.5px;width:1px;height:19px;background:#404040"></div>
<div class="code" style="top:423.5px;left:0;width:42px;text-align:right;color:#6e7681">26</div>
<div class="code" style="top:423.5px;left:160.40px"><span class="v">document</span><span class="x">.</span><span class="f">write</span><span class="m">(</span><span class="n">1</span><span class="x">+</span><span class="n">1</span><span class="x">+</span><span class="s">&#x27;&lt;br&gt;&#x27;</span><span class="m">)</span><span class="x">;</span></div>
<div style="position:absolute;left:68.00px;top:442.5px;width:30.80px;height:19px;background:rgba(255,255,64,0.07)"></div>
<div style="position:absolute;left:98.80px;top:442.5px;width:30.80px;height:19px;background:rgba(127,255,127,0.07)"></div>
<div style="position:absolute;left:68.00px;top:442.5px;width:1px;height:19px;background:#707070"></div>
<div style="position:absolute;left:98.80px;top:442.5px;width:1px;height:19px;background:#404040"></div>
<div class="code" style="top:442.5px;left:0;width:42px;text-align:right;color:#6e7681">27</div>
<div class="code" style="top:442.5px;left:129.60px"><span class="y">}</span></div>
<div style="position:absolute;left:68.00px;top:461.5px;width:30.80px;height:19px;background:rgba(255,255,64,0.07)"></div>
<div style="position:absolute;left:98.80px;top:461.5px;width:30.80px;height:19px;background:rgba(127,255,127,0.07)"></div>
<div style="position:absolute;left:68.00px;top:461.5px;width:1px;height:19px;background:#707070"></div>
<div style="position:absolute;left:98.80px;top:461.5px;width:1px;height:19px;background:#404040"></div>
<div class="code" style="top:461.5px;left:0;width:42px;text-align:right;color:#6e7681">28</div>
<div class="code" style="top:461.5px;left:129.60px"><span class="f">onePlusOne</span><span class="y">()</span><span class="x">;</span></div>
<div style="position:absolute;left:68.00px;top:480.5px;width:30.80px;height:19px;background:rgba(255,255,64,0.07)"></div>
<div style="position:absolute;left:98.80px;top:480.5px;width:30.80px;height:19px;background:rgba(127,255,127,0.07)"></div>
<div style="position:absolute;left:68.00px;top:480.5px;width:1px;height:19px;background:#707070"></div>
<div style="position:absolute;left:98.80px;top:480.5px;width:1px;height:19px;background:#404040"></div>
<div class="code" style="top:480.5px;left:0;width:42px;text-align:right;color:#6e7681">29</div>
<div class="code" style="top:480.5px;left:129.60px"><span class="k">function</span><span class="x"> </span><span class="f">sum</span><span class="y">(</span><span class="v">left</span><span class="x">, </span><span class="v">right</span><span class="y">)</span><span class="x"> </span><span class="y">{</span></div>
<div style="position:absolute;left:68.00px;top:499.5px;width:30.80px;height:19px;background:rgba(255,255,64,0.07)"></div>
<div style="position:absolute;left:98.80px;top:499.5px;width:30.80px;height:19px;background:rgba(127,255,127,0.07)"></div>
<div style="position:absolute;left:129.60px;top:499.5px;width:30.80px;height:19px;background:rgba(255,127,255,0.07)"></div>
<div style="position:absolute;left:68.00px;top:499.5px;width:1px;height:19px;background:#707070"></div>
<div style="position:absolute;left:98.80px;top:499.5px;width:1px;height:19px;background:#404040"></div>
<div style="position:absolute;left:129.60px;top:499.5px;width:1px;height:19px;background:#404040"></div>
<div class="code" style="top:499.5px;left:0;width:42px;text-align:right;color:#6e7681">30</div>
<div class="code" style="top:499.5px;left:160.40px"><span class="v">document</span><span class="x">.</span><span class="f">write</span><span class="m">(</span><span class="v">left</span><span class="x">+</span><span class="v">right</span><span class="x">+</span><span class="s">&#x27;&lt;br&gt;&#x27;</span><span class="m">)</span><span class="x">;</span></div>
<div style="position:absolute;left:68.00px;top:518.5px;width:30.80px;height:19px;background:rgba(255,255,64,0.07)"></div>
<div style="position:absolute;left:98.80px;top:518.5px;width:30.80px;height:19px;background:rgba(127,255,127,0.07)"></div>
<div style="position:absolute;left:68.00px;top:518.5px;width:1px;height:19px;background:#707070"></div>
<div style="position:absolute;left:98.80px;top:518.5px;width:1px;height:19px;background:#404040"></div>
<div class="code" style="top:518.5px;left:0;width:42px;text-align:right;color:#6e7681">31</div>
<div class="code" style="top:518.5px;left:129.60px"><span class="y">}</span></div>
<div style="position:absolute;left:68.00px;top:537.5px;width:30.80px;height:19px;background:rgba(255,255,64,0.07)"></div>
<div style="position:absolute;left:98.80px;top:537.5px;width:30.80px;height:19px;background:rgba(127,255,127,0.07)"></div>
<div style="position:absolute;left:68.00px;top:537.5px;width:1px;height:19px;background:#707070"></div>
<div style="position:absolute;left:98.80px;top:537.5px;width:1px;height:19px;background:#404040"></div>
<div class="code" style="top:537.5px;left:0;width:42px;text-align:right;color:#6e7681">32</div>
<div class="code" style="top:537.5px;left:129.60px"><span class="k">function</span><span class="x"> </span><span class="f">sumColorRed</span><span class="y">(</span><span class="v">left</span><span class="x">, </span><span class="v">right</span><span class="y">)</span><span class="x"> </span><span class="y">{</span></div>
<div style="position:absolute;left:68.00px;top:556.5px;width:30.80px;height:19px;background:rgba(255,255,64,0.07)"></div>
<div style="position:absolute;left:98.80px;top:556.5px;width:30.80px;height:19px;background:rgba(127,255,127,0.07)"></div>
<div style="position:absolute;left:129.60px;top:556.5px;width:30.80px;height:19px;background:rgba(255,127,255,0.07)"></div>
<div style="position:absolute;left:68.00px;top:556.5px;width:1px;height:19px;background:#707070"></div>
<div style="position:absolute;left:98.80px;top:556.5px;width:1px;height:19px;background:#404040"></div>
<div style="position:absolute;left:129.60px;top:556.5px;width:1px;height:19px;background:#404040"></div>
<div class="code" style="top:556.5px;left:0;width:42px;text-align:right;color:#6e7681">33</div>
<div class="code" style="top:556.5px;left:160.40px"><span class="v">document</span><span class="x">.</span><span class="f">write</span><span class="m">(</span><span class="s">&#x27;&lt;div style=&quot;color:red&quot;&gt;&#x27;</span><span class="x">+</span><span class="v">left</span><span class="x">+</span><span class="v">right</span><span class="x">+</span><span class="s">&#x27;&lt;/div&gt;&lt;br&gt;&#x27;</span><span class="m">)</span><span class="x">;</span></div>
<div style="position:absolute;left:68.00px;top:575.5px;width:30.80px;height:19px;background:rgba(255,255,64,0.07)"></div>
<div style="position:absolute;left:98.80px;top:575.5px;width:30.80px;height:19px;background:rgba(127,255,127,0.07)"></div>
<div style="position:absolute;left:68.00px;top:575.5px;width:1px;height:19px;background:#707070"></div>
<div style="position:absolute;left:98.80px;top:575.5px;width:1px;height:19px;background:#404040"></div>
<div class="code" style="top:575.5px;left:0;width:42px;text-align:right;color:#6e7681">34</div>
<div class="code" style="top:575.5px;left:129.60px"><span class="y">}</span></div>
<div style="position:absolute;left:68.00px;top:594.5px;width:30.80px;height:19px;background:rgba(255,255,64,0.07)"></div>
<div style="position:absolute;left:98.80px;top:594.5px;width:30.80px;height:19px;background:rgba(127,255,127,0.07)"></div>
<div style="position:absolute;left:68.00px;top:594.5px;width:1px;height:19px;background:#707070"></div>
<div style="position:absolute;left:98.80px;top:594.5px;width:1px;height:19px;background:#404040"></div>
<div class="code" style="top:594.5px;left:0;width:42px;text-align:right;color:#6e7681">35</div>
<div class="code" style="top:594.5px;left:129.60px"><span class="f">sum</span><span class="y">(</span><span class="n">2</span><span class="x">,</span><span class="n">3</span><span class="y">)</span><span class="x">;</span></div>
<div style="position:absolute;left:68.00px;top:613.5px;width:30.80px;height:19px;background:rgba(255,255,64,0.07)"></div>
<div style="position:absolute;left:98.80px;top:613.5px;width:30.80px;height:19px;background:rgba(127,255,127,0.07)"></div>
<div style="position:absolute;left:68.00px;top:613.5px;width:1px;height:19px;background:#707070"></div>
<div style="position:absolute;left:98.80px;top:613.5px;width:1px;height:19px;background:#404040"></div>
<div class="code" style="top:613.5px;left:0;width:42px;text-align:right;color:#6e7681">36</div>
<div class="code" style="top:613.5px;left:129.60px"><span class="f">sumColorRed</span><span class="y">(</span><span class="n">2</span><span class="x">,</span><span class="n">3</span><span class="y">)</span><span class="x">;</span></div>
<div style="position:absolute;left:68.00px;top:632.5px;width:30.80px;height:19px;background:rgba(255,255,64,0.07)"></div>
<div style="position:absolute;left:98.80px;top:632.5px;width:30.80px;height:19px;background:rgba(127,255,127,0.07)"></div>
<div style="position:absolute;left:68.00px;top:632.5px;width:1px;height:19px;background:#707070"></div>
<div style="position:absolute;left:98.80px;top:632.5px;width:1px;height:19px;background:#404040"></div>
<div class="code" style="top:632.5px;left:0;width:42px;text-align:right;color:#6e7681">37</div>
<div class="code" style="top:632.5px;left:129.60px"><span class="f">sum</span><span class="y">(</span><span class="n">3</span><span class="x">,</span><span class="n">4</span><span class="y">)</span><span class="x">;</span></div>
<div style="position:absolute;left:68.00px;top:651.5px;width:30.80px;height:19px;background:rgba(255,255,64,0.07)"></div>
<div style="position:absolute;left:68.00px;top:651.5px;width:1px;height:19px;background:#707070"></div>
<div class="code" style="top:651.5px;left:0;width:42px;text-align:right;color:#6e7681">38</div>
<div class="code" style="top:651.5px;left:98.80px"><span class="p">&lt;/</span><span class="t">script</span><span class="p">&gt;</span></div>
<div style="position:absolute;left:68.00px;top:670.5px;width:30.80px;height:19px;background:rgba(255,255,64,0.07)"></div>
<div style="position:absolute;left:68.00px;top:670.5px;width:1px;height:19px;background:#707070"></div>
<div class="code" style="top:670.5px;left:0;width:42px;text-align:right;color:#cccccc">39</div>
<div class="code" style="top:670.5px;left:98.80px"><span class="p">&lt;</span><span class="t">h2</span><span class="p">&gt;</span><span class="x">Return</span><span class="p">&lt;/</span><span class="t">h2</span><span class="p">&gt;</span></div>
<div style="position:absolute;left:68.00px;top:689.5px;width:30.80px;height:19px;background:rgba(255,255,64,0.07)"></div>
<div style="position:absolute;left:68.00px;top:689.5px;width:1px;height:19px;background:#707070"></div>
<div class="code" style="top:689.5px;left:0;width:42px;text-align:right;color:#6e7681">40</div>
<div class="code" style="top:689.5px;left:98.80px"><span class="p">&lt;</span><span class="t">script</span><span class="p">&gt;</span></div>
<div style="position:absolute;left:68.00px;top:708.5px;width:30.80px;height:19px;background:rgba(255,255,64,0.07)"></div>
<div style="position:absolute;left:98.80px;top:708.5px;width:30.80px;height:19px;background:rgba(127,255,127,0.07)"></div>
<div style="position:absolute;left:68.00px;top:708.5px;width:1px;height:19px;background:#707070"></div>
<div style="position:absolute;left:98.80px;top:708.5px;width:1px;height:19px;background:#404040"></div>
<div class="code" style="top:708.5px;left:0;width:42px;text-align:right;color:#6e7681">41</div>
<div class="code" style="top:708.5px;left:129.60px"><span class="k">function</span><span class="x"> </span><span class="f">sum2</span><span class="y">(</span><span class="v">left</span><span class="x">, </span><span class="v">right</span><span class="y">)</span><span class="x"> </span><span class="y">{</span></div>
<div style="position:absolute;left:68.00px;top:727.5px;width:30.80px;height:19px;background:rgba(255,255,64,0.07)"></div>
<div style="position:absolute;left:98.80px;top:727.5px;width:30.80px;height:19px;background:rgba(127,255,127,0.07)"></div>
<div style="position:absolute;left:129.60px;top:727.5px;width:30.80px;height:19px;background:rgba(255,127,255,0.07)"></div>
<div style="position:absolute;left:68.00px;top:727.5px;width:1px;height:19px;background:#707070"></div>
<div style="position:absolute;left:98.80px;top:727.5px;width:1px;height:19px;background:#404040"></div>
<div style="position:absolute;left:129.60px;top:727.5px;width:1px;height:19px;background:#404040"></div>
<div class="code" style="top:727.5px;left:0;width:42px;text-align:right;color:#6e7681">42</div>
<div class="code" style="top:727.5px;left:160.40px"><span class="r">return</span><span class="x"> </span><span class="v">left</span><span class="x">+</span><span class="v">right</span><span class="x">;</span></div>
<div style="position:absolute;left:68.00px;top:746.5px;width:30.80px;height:19px;background:rgba(255,255,64,0.07)"></div>
<div style="position:absolute;left:98.80px;top:746.5px;width:30.80px;height:19px;background:rgba(127,255,127,0.07)"></div>
<div style="position:absolute;left:68.00px;top:746.5px;width:1px;height:19px;background:#707070"></div>
<div style="position:absolute;left:98.80px;top:746.5px;width:1px;height:19px;background:#404040"></div>
<div class="code" style="top:746.5px;left:0;width:42px;text-align:right;color:#6e7681">43</div>
<div class="code" style="top:746.5px;left:129.60px"><span class="y">}</span></div>
<div style="position:absolute;left:68.00px;top:765.5px;width:30.80px;height:19px;background:rgba(255,255,64,0.07)"></div>
<div style="position:absolute;left:98.80px;top:765.5px;width:30.80px;height:19px;background:rgba(127,255,127,0.07)"></div>
<div style="position:absolute;left:68.00px;top:765.5px;width:1px;height:19px;background:#707070"></div>
<div style="position:absolute;left:98.80px;top:765.5px;width:1px;height:19px;background:#404040"></div>
<div class="code" style="top:765.5px;left:0;width:42px;text-align:right;color:#6e7681">44</div>
<div class="code" style="top:765.5px;left:129.60px"><span class="v">document</span><span class="x">.</span><span class="f">write</span><span class="y">(</span><span class="f">sum2</span><span class="m">(</span><span class="n">2</span><span class="x">,</span><span class="n">3</span><span class="m">)</span><span class="x">+</span><span class="s">&#x27;&lt;br&gt;&#x27;</span><span class="y">)</span><span class="x">;</span></div>
<div style="position:absolute;left:68.00px;top:784.5px;width:30.80px;height:19px;background:rgba(255,255,64,0.07)"></div>
<div style="position:absolute;left:98.80px;top:784.5px;width:30.80px;height:19px;background:rgba(127,255,127,0.07)"></div>
<div style="position:absolute;left:68.00px;top:784.5px;width:1px;height:19px;background:#707070"></div>
<div style="position:absolute;left:98.80px;top:784.5px;width:1px;height:19px;background:#404040"></div>
<div class="code" style="top:784.5px;left:0;width:42px;text-align:right;color:#6e7681">45</div>
<div class="code" style="top:784.5px;left:129.60px"><span class="v">document</span><span class="x">.</span><span class="f">write</span><span class="y">(</span><span class="s">&#x27;&lt;div style=&quot;color:red&quot;&gt;&#x27;</span><span class="x">+</span><span class="f">sum2</span><span class="m">(</span><span class="n">2</span><span class="x">,</span><span class="n">3</span><span class="m">)</span><span class="x">+</span><span class="s">&#x27;&lt;/div&gt;&lt;br&gt;&#x27;</span><span class="y">)</span><span class="x">;</span></div>
<div style="position:absolute;left:68.00px;top:803.5px;width:30.80px;height:19px;background:rgba(255,255,64,0.07)"></div>
<div style="position:absolute;left:98.80px;top:803.5px;width:30.80px;height:19px;background:rgba(127,255,127,0.07)"></div>
<div style="position:absolute;left:68.00px;top:803.5px;width:1px;height:19px;background:#707070"></div>
<div style="position:absolute;left:98.80px;top:803.5px;width:1px;height:19px;background:#404040"></div>
<div class="code" style="top:803.5px;left:0;width:42px;text-align:right;color:#6e7681">46</div>
<div class="code" style="top:803.5px;left:129.60px"><span class="v">document</span><span class="x">.</span><span class="f">write</span><span class="y">(</span><span class="s">&#x27;&lt;div style=&quot;font-size:3rem;&quot;&gt;&#x27;</span><span class="x">+</span><span class="f">sum2</span><span class="m">(</span><span class="n">2</span><span class="x">,</span><span class="n">3</span><span class="m">)</span><span class="x">+</span><span class="s">&#x27;&lt;/div&gt;&lt;br&gt;&#x27;</span><span class="y">)</span><span class="x">;</span></div>
<div style="position:absolute;left:68.00px;top:822.5px;width:30.80px;height:19px;background:rgba(255,255,64,0.07)"></div>
<div style="position:absolute;left:68.00px;top:822.5px;width:1px;height:19px;background:#707070"></div>
<div class="code" style="top:822.5px;left:0;width:42px;text-align:right;color:#6e7681">47</div>
<div class="code" style="top:822.5px;left:98.80px"><span class="p">&lt;/</span><span class="t">script</span><span class="p">&gt;</span></div>
<div class="code" style="top:841.5px;left:0;width:42px;text-align:right;color:#6e7681">48</div>
<div class="code" style="top:841.5px;left:68.00px"><span class="p">&lt;/</span><span class="t">body</span><span class="p">&gt;</span></div>
<div class="code" style="top:860.5px;left:0;width:42px;text-align:right;color:#6e7681">49</div>
<div class="code" style="top:860.5px;left:68.00px"><span class="p">&lt;/</span><span class="t">html</span><span class="p">&gt;</span></div>
<div style="position:absolute;left:0;top:0;width:795px;height:38px;background:#1f1f1f;box-shadow:0 2px 2px -1px #000"></div>
<div class="code" style="top:0px;left:0;width:42px;text-align:right;color:#6e7681">2</div>
<div class="code" style="top:0px;left:68px"><span class="p">&lt;</span><span class="t">html</span><span class="x"> </span><span class="a">lang</span><span class="x">=</span><span class="s">&quot;en&quot;</span><span class="p">&gt;</span></div>
<div class="code" style="top:19px;left:0;width:42px;text-align:right;color:#6e7681">3</div>
<div class="code" style="top:19px;left:68px"><span class="p">&lt;</span><span class="t">head</span><span class="p">&gt;</span></div>
<div style="position:absolute;left:803px;top:0px;width:2px;height:2px;background:#808080;opacity:0.42"></div>
<div style="position:absolute;left:805px;top:0px;width:7px;height:2px;background:#569cd6;opacity:0.42"></div>
<div style="position:absolute;left:813px;top:0px;width:4px;height:2px;background:#9cdcfe;opacity:0.42"></div>
<div style="position:absolute;left:817px;top:0px;width:1px;height:2px;background:#808080;opacity:0.42"></div>
<div style="position:absolute;left:803px;top:2px;width:1px;height:2px;background:#808080;opacity:0.42"></div>
<div style="position:absolute;left:804px;top:2px;width:4px;height:2px;background:#569cd6;opacity:0.42"></div>
<div style="position:absolute;left:809px;top:2px;width:4px;height:2px;background:#9cdcfe;opacity:0.42"></div>
<div style="position:absolute;left:813px;top:2px;width:1px;height:2px;background:#cccccc;opacity:0.42"></div>
<div style="position:absolute;left:814px;top:2px;width:4px;height:2px;background:#ce9178;opacity:0.42"></div>
<div style="position:absolute;left:818px;top:2px;width:1px;height:2px;background:#808080;opacity:0.42"></div>
<div style="position:absolute;left:803px;top:4px;width:1px;height:2px;background:#808080;opacity:0.42"></div>
<div style="position:absolute;left:804px;top:4px;width:4px;height:2px;background:#569cd6;opacity:0.42"></div>
<div style="position:absolute;left:808px;top:4px;width:1px;height:2px;background:#808080;opacity:0.42"></div>
<div style="position:absolute;left:807px;top:6px;width:1px;height:2px;background:#808080;opacity:0.42"></div>
<div style="position:absolute;left:808px;top:6px;width:4px;height:2px;background:#569cd6;opacity:0.42"></div>
<div style="position:absolute;left:813px;top:6px;width:7px;height:2px;background:#9cdcfe;opacity:0.42"></div>
<div style="position:absolute;left:820px;top:6px;width:1px;height:2px;background:#cccccc;opacity:0.42"></div>
<div style="position:absolute;left:821px;top:6px;width:7px;height:2px;background:#ce9178;opacity:0.42"></div>
<div style="position:absolute;left:828px;top:6px;width:1px;height:2px;background:#808080;opacity:0.42"></div>
<div style="position:absolute;left:807px;top:8px;width:1px;height:2px;background:#808080;opacity:0.42"></div>
<div style="position:absolute;left:808px;top:8px;width:4px;height:2px;background:#569cd6;opacity:0.42"></div>
<div style="position:absolute;left:813px;top:8px;width:4px;height:2px;background:#9cdcfe;opacity:0.42"></div>
<div style="position:absolute;left:817px;top:8px;width:1px;height:2px;background:#cccccc;opacity:0.42"></div>
<div style="position:absolute;left:818px;top:8px;width:10px;height:2px;background:#ce9178;opacity:0.42"></div>
<div style="position:absolute;left:829px;top:8px;width:7px;height:2px;background:#9cdcfe;opacity:0.42"></div>
<div style="position:absolute;left:836px;top:8px;width:1px;height:2px;background:#cccccc;opacity:0.42"></div>
<div style="position:absolute;left:837px;top:8px;width:20px;height:2px;background:#ce9178;opacity:0.42"></div>
<div style="position:absolute;left:858px;top:8px;width:18px;height:2px;background:#ce9178;opacity:0.42"></div>
<div style="position:absolute;left:876px;top:8px;width:1px;height:2px;background:#808080;opacity:0.42"></div>
<div style="position:absolute;left:807px;top:10px;width:1px;height:2px;background:#808080;opacity:0.42"></div>
<div style="position:absolute;left:808px;top:10px;width:5px;height:2px;background:#569cd6;opacity:0.42"></div>
<div style="position:absolute;left:813px;top:10px;width:1px;height:2px;background:#808080;opacity:0.42"></div>
<div style="position:absolute;left:814px;top:10px;width:8px;height:2px;background:#cccccc;opacity:0.42"></div>
<div style="position:absolute;left:822px;top:10px;width:2px;height:2px;background:#808080;opacity:0.42"></div>
<div style="position:absolute;left:824px;top:10px;width:5px;height:2px;background:#569cd6;opacity:0.42"></div>
<div style="position:absolute;left:829px;top:10px;width:1px;height:2px;background:#808080;opacity:0.42"></div>
<div style="position:absolute;left:803px;top:12px;width:2px;height:2px;background:#808080;opacity:0.42"></div>
<div style="position:absolute;left:805px;top:12px;width:4px;height:2px;background:#569cd6;opacity:0.42"></div>
<div style="position:absolute;left:809px;top:12px;width:1px;height:2px;background:#808080;opacity:0.42"></div>
<div style="position:absolute;left:803px;top:14px;width:1px;height:2px;background:#808080;opacity:0.42"></div>
<div style="position:absolute;left:804px;top:14px;width:4px;height:2px;background:#569cd6;opacity:0.42"></div>
<div style="position:absolute;left:808px;top:14px;width:1px;height:2px;background:#808080;opacity:0.42"></div>
<div style="position:absolute;left:807px;top:16px;width:1px;height:2px;background:#808080;opacity:0.42"></div>
<div style="position:absolute;left:808px;top:16px;width:2px;height:2px;background:#569cd6;opacity:0.42"></div>
<div style="position:absolute;left:810px;top:16px;width:1px;height:2px;background:#808080;opacity:0.42"></div>
<div style="position:absolute;left:811px;top:16px;width:8px;height:2px;background:#cccccc;opacity:0.42"></div>
<div style="position:absolute;left:819px;top:16px;width:2px;height:2px;background:#808080;opacity:0.42"></div>
<div style="position:absolute;left:821px;top:16px;width:2px;height:2px;background:#569cd6;opacity:0.42"></div>
<div style="position:absolute;left:823px;top:16px;width:1px;height:2px;background:#808080;opacity:0.42"></div>
<div style="position:absolute;left:807px;top:18px;width:1px;height:2px;background:#808080;opacity:0.42"></div>
<div style="position:absolute;left:808px;top:18px;width:2px;height:2px;background:#569cd6;opacity:0.42"></div>
<div style="position:absolute;left:810px;top:18px;width:1px;height:2px;background:#808080;opacity:0.42"></div>
<div style="position:absolute;left:811px;top:18px;width:5px;height:2px;background:#cccccc;opacity:0.42"></div>
<div style="position:absolute;left:816px;top:18px;width:2px;height:2px;background:#808080;opacity:0.42"></div>
<div style="position:absolute;left:818px;top:18px;width:2px;height:2px;background:#569cd6;opacity:0.42"></div>
<div style="position:absolute;left:820px;top:18px;width:1px;height:2px;background:#808080;opacity:0.42"></div>
<div style="position:absolute;left:807px;top:20px;width:1px;height:2px;background:#808080;opacity:0.42"></div>
<div style="position:absolute;left:808px;top:20px;width:2px;height:2px;background:#569cd6;opacity:0.42"></div>
<div style="position:absolute;left:810px;top:20px;width:1px;height:2px;background:#808080;opacity:0.42"></div>
<div style="position:absolute;left:811px;top:22px;width:1px;height:2px;background:#808080;opacity:0.42"></div>
<div style="position:absolute;left:812px;top:22px;width:6px;height:2px;background:#569cd6;opacity:0.42"></div>
<div style="position:absolute;left:818px;top:22px;width:1px;height:2px;background:#808080;opacity:0.42"></div>
<div style="position:absolute;left:815px;top:24px;width:8px;height:2px;background:#569cd6;opacity:0.42"></div>
<div style="position:absolute;left:824px;top:24px;width:3px;height:2px;background:#dcdcaa;opacity:0.42"></div>
<div style="position:absolute;left:827px;top:24px;width:3px;height:2px;background:#ffd700;opacity:0.42"></div>
<div style="position:absolute;left:819px;top:26px;width:8px;height:2px;background:#9cdcfe;opacity:0.42"></div>
<div style="position:absolute;left:827px;top:26px;width:1px;height:2px;background:#cccccc;opacity:0.42"></div>
<div style="position:absolute;left:828px;top:26px;width:5px;height:2px;background:#dcdcaa;opacity:0.42"></div>
<div style="position:absolute;left:833px;top:26px;width:1px;height:2px;background:#da70d6;opacity:0.42"></div>
<div style="position:absolute;left:834px;top:26px;width:14px;height:2px;background:#ce9178;opacity:0.42"></div>
<div style="position:absolute;left:848px;top:26px;width:1px;height:2px;background:#da70d6;opacity:0.42"></div>
<div style="position:absolute;left:849px;top:26px;width:1px;height:2px;background:#cccccc;opacity:0.42"></div>
<div style="position:absolute;left:819px;top:28px;width:8px;height:2px;background:#9cdcfe;opacity:0.42"></div>
<div style="position:absolute;left:827px;top:28px;width:1px;height:2px;background:#cccccc;opacity:0.42"></div>
<div style="position:absolute;left:828px;top:28px;width:5px;height:2px;background:#dcdcaa;opacity:0.42"></div>
<div style="position:absolute;left:833px;top:28px;width:1px;height:2px;background:#da70d6;opacity:0.42"></div>
<div style="position:absolute;left:834px;top:28px;width:14px;height:2px;background:#ce9178;opacity:0.42"></div>
<div style="position:absolute;left:848px;top:28px;width:1px;height:2px;background:#da70d6;opacity:0.42"></div>
<div style="position:absolute;left:849px;top:28px;width:1px;height:2px;background:#cccccc;opacity:0.42"></div>
<div style="position:absolute;left:815px;top:30px;width:1px;height:2px;background:#ffd700;opacity:0.42"></div>
<div style="position:absolute;left:815px;top:32px;width:8px;height:2px;background:#9cdcfe;opacity:0.42"></div>
<div style="position:absolute;left:823px;top:32px;width:1px;height:2px;background:#cccccc;opacity:0.42"></div>
<div style="position:absolute;left:824px;top:32px;width:5px;height:2px;background:#dcdcaa;opacity:0.42"></div>
<div style="position:absolute;left:829px;top:32px;width:1px;height:2px;background:#ffd700;opacity:0.42"></div>
<div style="position:absolute;left:830px;top:32px;width:12px;height:2px;background:#ce9178;opacity:0.42"></div>
<div style="position:absolute;left:842px;top:32px;width:1px;height:2px;background:#ffd700;opacity:0.42"></div>
<div style="position:absolute;left:843px;top:32px;width:1px;height:2px;background:#cccccc;opacity:0.42"></div>
<div style="position:absolute;left:815px;top:34px;width:3px;height:2px;background:#dcdcaa;opacity:0.42"></div>
<div style="position:absolute;left:818px;top:34px;width:2px;height:2px;background:#ffd700;opacity:0.42"></div>
<div style="position:absolute;left:820px;top:34px;width:1px;height:2px;background:#cccccc;opacity:0.42"></div>
<div style="position:absolute;left:815px;top:36px;width:8px;height:2px;background:#9cdcfe;opacity:0.42"></div>
<div style="position:absolute;left:823px;top:36px;width:1px;height:2px;background:#cccccc;opacity:0.42"></div>
<div style="position:absolute;left:824px;top:36px;width:5px;height:2px;background:#dcdcaa;opacity:0.42"></div>
<div style="position:absolute;left:829px;top:36px;width:1px;height:2px;background:#ffd700;opacity:0.42"></div>
<div style="position:absolute;left:830px;top:36px;width:12px;height:2px;background:#ce9178;opacity:0.42"></div>
<div style="position:absolute;left:842px;top:36px;width:1px;height:2px;background:#ffd700;opacity:0.42"></div>
<div style="position:absolute;left:843px;top:36px;width:1px;height:2px;background:#cccccc;opacity:0.42"></div>
<div style="position:absolute;left:815px;top:38px;width:3px;height:2px;background:#dcdcaa;opacity:0.42"></div>
<div style="position:absolute;left:818px;top:38px;width:2px;height:2px;background:#ffd700;opacity:0.42"></div>
<div style="position:absolute;left:820px;top:38px;width:1px;height:2px;background:#cccccc;opacity:0.42"></div>
<div style="position:absolute;left:811px;top:40px;width:2px;height:2px;background:#808080;opacity:0.42"></div>
<div style="position:absolute;left:813px;top:40px;width:6px;height:2px;background:#569cd6;opacity:0.42"></div>
<div style="position:absolute;left:819px;top:40px;width:1px;height:2px;background:#808080;opacity:0.42"></div>
<div style="position:absolute;left:807px;top:42px;width:2px;height:2px;background:#808080;opacity:0.42"></div>
<div style="position:absolute;left:809px;top:42px;width:2px;height:2px;background:#569cd6;opacity:0.42"></div>
<div style="position:absolute;left:811px;top:42px;width:1px;height:2px;background:#808080;opacity:0.42"></div>
<div style="position:absolute;left:807px;top:44px;width:1px;height:2px;background:#808080;opacity:0.42"></div>
<div style="position:absolute;left:808px;top:44px;width:2px;height:2px;background:#569cd6;opacity:0.42"></div>
<div style="position:absolute;left:810px;top:44px;width:1px;height:2px;background:#808080;opacity:0.42"></div>
<div style="position:absolute;left:811px;top:44px;width:9px;height:2px;background:#cccccc;opacity:0.42"></div>
<div style="position:absolute;left:821px;top:44px;width:1px;height:2px;background:#cccccc;opacity:0.42"></div>
<div style="position:absolute;left:823px;top:44px;width:8px;height:2px;background:#cccccc;opacity:0.42"></div>
<div style="position:absolute;left:831px;top:44px;width:2px;height:2px;background:#808080;opacity:0.42"></div>
<div style="position:absolute;left:833px;top:44px;width:2px;height:2px;background:#569cd6;opacity:0.42"></div>
<div style="position:absolute;left:835px;top:44px;width:1px;height:2px;background:#808080;opacity:0.42"></div>
<div style="position:absolute;left:807px;top:46px;width:1px;height:2px;background:#808080;opacity:0.42"></div>
<div style="position:absolute;left:808px;top:46px;width:6px;height:2px;background:#569cd6;opacity:0.42"></div>
<div style="position:absolute;left:814px;top:46px;width:1px;height:2px;background:#808080;opacity:0.42"></div>
<div style="position:absolute;left:811px;top:48px;width:8px;height:2px;background:#569cd6;opacity:0.42"></div>
<div style="position:absolute;left:820px;top:48px;width:10px;height:2px;background:#dcdcaa;opacity:0.42"></div>
<div style="position:absolute;left:830px;top:48px;width:2px;height:2px;background:#ffd700;opacity:0.42"></div>
<div style="position:absolute;left:833px;top:48px;width:1px;height:2px;background:#ffd700;opacity:0.42"></div>
<div style="position:absolute;left:815px;top:50px;width:8px;height:2px;background:#9cdcfe;opacity:0.42"></div>
<div style="position:absolute;left:823px;top:50px;width:1px;height:2px;background:#cccccc;opacity:0.42"></div>
<div style="position:absolute;left:824px;top:50px;width:5px;height:2px;background:#dcdcaa;opacity:0.42"></div>
<div style="position:absolute;left:829px;top:50px;width:1px;height:2px;background:#da70d6;opacity:0.42"></div>
<div style="position:absolute;left:830px;top:50px;width:1px;height:2px;background:#b5cea8;opacity:0.42"></div>
<div style="position:absolute;left:831px;top:50px;width:1px;height:2px;background:#cccccc;opacity:0.42"></div>
<div style="position:absolute;left:832px;top:50px;width:1px;height:2px;background:#b5cea8;opacity:0.42"></div>
<div style="position:absolute;left:833px;top:50px;width:1px;height:2px;background:#cccccc;opacity:0.42"></div>
<div style="position:absolute;left:834px;top:50px;width:6px;height:2px;background:#ce9178;opacity:0.42"></div>
<div style="position:absolute;left:840px;top:50px;width:1px;height:2px;background:#da70d6;opacity:0.42"></div>
<div style="position:absolute;left:841px;top:50px;width:1px;height:2px;background:#cccccc;opacity:0.42"></div>
<div style="position:absolute;left:811px;top:52px;width:1px;height:2px;background:#ffd700;opacity:0.42"></div>
<div style="position:absolute;left:811px;top:54px;width:10px;height:2px;background:#dcdcaa;opacity:0.42"></div>
<div style="position:absolute;left:821px;top:54px;width:2px;height:2px;background:#ffd700;opacity:0.42"></div>
<div style="position:absolute;left:823px;top:54px;width:1px;height:2px;background:#cccccc;opacity:0.42"></div>
<div style="position:absolute;left:811px;top:56px;width:8px;height:2px;background:#569cd6;opacity:0.42"></div>
<div style="position:absolute;left:820px;top:56px;width:3px;height:2px;background:#dcdcaa;opacity:0.42"></div>
<div style="position:absolute;left:823px;top:56px;width:1px;height:2px;background:#ffd700;opacity:0.42"></div>
<div style="position:absolute;left:824px;top:56px;width:4px;height:2px;background:#9cdcfe;opacity:0.42"></div>
<div style="position:absolute;left:828px;top:56px;width:1px;height:2px;background:#cccccc;opacity:0.42"></div>
<div style="position:absolute;left:830px;top:56px;width:5px;height:2px;background:#9cdcfe;opacity:0.42"></div>
<div style="position:absolute;left:835px;top:56px;width:1px;height:2px;background:#ffd700;opacity:0.42"></div>
<div style="position:absolute;left:837px;top:56px;width:1px;height:2px;background:#ffd700;opacity:0.42"></div>
<div style="position:absolute;left:815px;top:58px;width:8px;height:2px;background:#9cdcfe;opacity:0.42"></div>
<div style="position:absolute;left:823px;top:58px;width:1px;height:2px;background:#cccccc;opacity:0.42"></div>
<div style="position:absolute;left:824px;top:58px;width:5px;height:2px;background:#dcdcaa;opacity:0.42"></div>
<div style="position:absolute;left:829px;top:58px;width:1px;height:2px;background:#da70d6;opacity:0.42"></div>
<div style="position:absolute;left:830px;top:58px;width:4px;height:2px;background:#9cdcfe;opacity:0.42"></div>
<div style="position:absolute;left:834px;top:58px;width:1px;height:2px;background:#cccccc;opacity:0.42"></div>
<div style="position:absolute;left:835px;top:58px;width:5px;height:2px;background:#9cdcfe;opacity:0.42"></div>
<div style="position:absolute;left:840px;top:58px;width:1px;height:2px;background:#cccccc;opacity:0.42"></div>
<div style="position:absolute;left:841px;top:58px;width:6px;height:2px;background:#ce9178;opacity:0.42"></div>
<div style="position:absolute;left:847px;top:58px;width:1px;height:2px;background:#da70d6;opacity:0.42"></div>
<div style="position:absolute;left:848px;top:58px;width:1px;height:2px;background:#cccccc;opacity:0.42"></div>
<div style="position:absolute;left:811px;top:60px;width:1px;height:2px;background:#ffd700;opacity:0.42"></div>
<div style="position:absolute;left:811px;top:62px;width:8px;height:2px;background:#569cd6;opacity:0.42"></div>
<div style="position:absolute;left:820px;top:62px;width:11px;height:2px;background:#dcdcaa;opacity:0.42"></div>
<div style="position:absolute;left:831px;top:62px;width:1px;height:2px;background:#ffd700;opacity:0.42"></div>
<div style="position:absolute;left:832px;top:62px;width:4px;height:2px;background:#9cdcfe;opacity:0.42"></div>
<div style="position:absolute;left:836px;top:62px;width:1px;height:2px;background:#cccccc;opacity:0.42"></div>
<div style="position:absolute;left:838px;top:62px;width:5px;height:2px;background:#9cdcfe;opacity:0.42"></div>
<div style="position:absolute;left:843px;top:62px;width:1px;height:2px;background:#ffd700;opacity:0.42"></div>
<div style="position:absolute;left:845px;top:62px;width:1px;height:2px;background:#ffd700;opacity:0.42"></div>
<div style="position:absolute;left:815px;top:64px;width:8px;height:2px;background:#9cdcfe;opacity:0.42"></div>
<div style="position:absolute;left:823px;top:64px;width:1px;height:2px;background:#cccccc;opacity:0.42"></div>
<div style="position:absolute;left:824px;top:64px;width:5px;height:2px;background:#dcdcaa;opacity:0.42"></div>
<div style="position:absolute;left:829px;top:64px;width:1px;height:2px;background:#da70d6;opacity:0.42"></div>
<div style="position:absolute;left:830px;top:64px;width:5px;height:2px;background:#ce9178;opacity:0.42"></div>
<div style="position:absolute;left:836px;top:64px;width:19px;height:2px;background:#ce9178;opacity:0.42"></div>
<div style="position:absolute;left:855px;top:64px;width:1px;height:2px;background:#cccccc;opacity:0.42"></div>
<div style="position:absolute;left:856px;top:64px;width:4px;height:2px;background:#9cdcfe;opacity:0.42"></div>
<div style="position:absolute;left:860px;top:64px;width:1px;height:2px;background:#cccccc;opacity:0.42"></div>
<div style="position:absolute;left:861px;top:64px;width:5px;height:2px;background:#9cdcfe;opacity:0.42"></div>
<div style="position:absolute;left:866px;top:64px;width:1px;height:2px;background:#cccccc;opacity:0.42"></div>
<div style="position:absolute;left:867px;top:64px;width:12px;height:2px;background:#ce9178;opacity:0.42"></div>
<div style="position:absolute;left:879px;top:64px;width:1px;height:2px;background:#da70d6;opacity:0.42"></div>
<div style="position:absolute;left:880px;top:64px;width:1px;height:2px;background:#cccccc;opacity:0.42"></div>
<div style="position:absolute;left:811px;top:66px;width:1px;height:2px;background:#ffd700;opacity:0.42"></div>
<div style="position:absolute;left:811px;top:68px;width:3px;height:2px;background:#dcdcaa;opacity:0.42"></div>
<div style="position:absolute;left:814px;top:68px;width:1px;height:2px;background:#ffd700;opacity:0.42"></div>
<div style="position:absolute;left:815px;top:68px;width:1px;height:2px;background:#b5cea8;opacity:0.42"></div>
<div style="position:absolute;left:816px;top:68px;width:1px;height:2px;background:#cccccc;opacity:0.42"></div>
<div style="position:absolute;left:817px;top:68px;width:1px;height:2px;background:#b5cea8;opacity:0.42"></div>
<div style="position:absolute;left:818px;top:68px;width:1px;height:2px;background:#ffd700;opacity:0.42"></div>
<div style="position:absolute;left:819px;top:68px;width:1px;height:2px;background:#cccccc;opacity:0.42"></div>
<div style="position:absolute;left:811px;top:70px;width:11px;height:2px;background:#dcdcaa;opacity:0.42"></div>
<div style="position:absolute;left:822px;top:70px;width:1px;height:2px;background:#ffd700;opacity:0.42"></div>
<div style="position:absolute;left:823px;top:70px;width:1px;height:2px;background:#b5cea8;opacity:0.42"></div>
<div style="position:absolute;left:824px;top:70px;width:1px;height:2px;background:#cccccc;opacity:0.42"></div>
<div style="position:absolute;left:825px;top:70px;width:1px;height:2px;background:#b5cea8;opacity:0.42"></div>
<div style="position:absolute;left:826px;top:70px;width:1px;height:2px;background:#ffd700;opacity:0.42"></div>
<div style="position:absolute;left:827px;top:70px;width:1px;height:2px;background:#cccccc;opacity:0.42"></div>
<div style="position:absolute;left:811px;top:72px;width:3px;height:2px;background:#dcdcaa;opacity:0.42"></div>
<div style="position:absolute;left:814px;top:72px;width:1px;height:2px;background:#ffd700;opacity:0.42"></div>
<div style="position:absolute;left:815px;top:72px;width:1px;height:2px;background:#b5cea8;opacity:0.42"></div>
<div style="position:absolute;left:816px;top:72px;width:1px;height:2px;background:#cccccc;opacity:0.42"></div>
<div style="position:absolute;left:817px;top:72px;width:1px;height:2px;background:#b5cea8;opacity:0.42"></div>
<div style="position:absolute;left:818px;top:72px;width:1px;height:2px;background:#ffd700;opacity:0.42"></div>
<div style="position:absolute;left:819px;top:72px;width:1px;height:2px;background:#cccccc;opacity:0.42"></div>
<div style="position:absolute;left:807px;top:74px;width:2px;height:2px;background:#808080;opacity:0.42"></div>
<div style="position:absolute;left:809px;top:74px;width:6px;height:2px;background:#569cd6;opacity:0.42"></div>
<div style="position:absolute;left:815px;top:74px;width:1px;height:2px;background:#808080;opacity:0.42"></div>
<div style="position:absolute;left:807px;top:76px;width:1px;height:2px;background:#808080;opacity:0.42"></div>
<div style="position:absolute;left:808px;top:76px;width:2px;height:2px;background:#569cd6;opacity:0.42"></div>
<div style="position:absolute;left:810px;top:76px;width:1px;height:2px;background:#808080;opacity:0.42"></div>
<div style="position:absolute;left:811px;top:76px;width:6px;height:2px;background:#cccccc;opacity:0.42"></div>
<div style="position:absolute;left:817px;top:76px;width:2px;height:2px;background:#808080;opacity:0.42"></div>
<div style="position:absolute;left:819px;top:76px;width:2px;height:2px;background:#569cd6;opacity:0.42"></div>
<div style="position:absolute;left:821px;top:76px;width:1px;height:2px;background:#808080;opacity:0.42"></div>
<div style="position:absolute;left:807px;top:78px;width:1px;height:2px;background:#808080;opacity:0.42"></div>
<div style="position:absolute;left:808px;top:78px;width:6px;height:2px;background:#569cd6;opacity:0.42"></div>
<div style="position:absolute;left:814px;top:78px;width:1px;height:2px;background:#808080;opacity:0.42"></div>
<div style="position:absolute;left:811px;top:80px;width:8px;height:2px;background:#569cd6;opacity:0.42"></div>
<div style="position:absolute;left:820px;top:80px;width:4px;height:2px;background:#dcdcaa;opacity:0.42"></div>
<div style="position:absolute;left:824px;top:80px;width:1px;height:2px;background:#ffd700;opacity:0.42"></div>
<div style="position:absolute;left:825px;top:80px;width:4px;height:2px;background:#9cdcfe;opacity:0.42"></div>
<div style="position:absolute;left:829px;top:80px;width:1px;height:2px;background:#cccccc;opacity:0.42"></div>
<div style="position:absolute;left:831px;top:80px;width:5px;height:2px;background:#9cdcfe;opacity:0.42"></div>
<div style="position:absolute;left:836px;top:80px;width:1px;height:2px;background:#ffd700;opacity:0.42"></div>
<div style="position:absolute;left:838px;top:80px;width:1px;height:2px;background:#ffd700;opacity:0.42"></div>
<div style="position:absolute;left:815px;top:82px;width:6px;height:2px;background:#c586c0;opacity:0.42"></div>
<div style="position:absolute;left:822px;top:82px;width:4px;height:2px;background:#9cdcfe;opacity:0.42"></div>
<div style="position:absolute;left:826px;top:82px;width:1px;height:2px;background:#cccccc;opacity:0.42"></div>
<div style="position:absolute;left:827px;top:82px;width:5px;height:2px;background:#9cdcfe;opacity:0.42"></div>
<div style="position:absolute;left:832px;top:82px;width:1px;height:2px;background:#cccccc;opacity:0.42"></div>
<div style="position:absolute;left:811px;top:84px;width:1px;height:2px;background:#ffd700;opacity:0.42"></div>
<div style="position:absolute;left:811px;top:86px;width:8px;height:2px;background:#9cdcfe;opacity:0.42"></div>
<div style="position:absolute;left:819px;top:86px;width:1px;height:2px;background:#cccccc;opacity:0.42"></div>
<div style="position:absolute;left:820px;top:86px;width:5px;height:2px;background:#dcdcaa;opacity:0.42"></div>
<div style="position:absolute;left:825px;top:86px;width:1px;height:2px;background:#ffd700;opacity:0.42"></div>
<div style="position:absolute;left:826px;top:86px;width:4px;height:2px;background:#dcdcaa;opacity:0.42"></div>
<div style="position:absolute;left:830px;top:86px;width:1px;height:2px;background:#da70d6;opacity:0.42"></div>
<div style="position:absolute;left:831px;top:86px;width:1px;height:2px;background:#b5cea8;opacity:0.42"></div>
<div style="position:absolute;left:832px;top:86px;width:1px;height:2px;background:#cccccc;opacity:0.42"></div>
<div style="position:absolute;left:833px;top:86px;width:1px;height:2px;background:#b5cea8;opacity:0.42"></div>
<div style="position:absolute;left:834px;top:86px;width:1px;height:2px;background:#da70d6;opacity:0.42"></div>
<div style="position:absolute;left:835px;top:86px;width:1px;height:2px;background:#cccccc;opacity:0.42"></div>
<div style="position:absolute;left:836px;top:86px;width:6px;height:2px;background:#ce9178;opacity:0.42"></div>
<div style="position:absolute;left:842px;top:86px;width:1px;height:2px;background:#ffd700;opacity:0.42"></div>
<div style="position:absolute;left:843px;top:86px;width:1px;height:2px;background:#cccccc;opacity:0.42"></div>
<div style="position:absolute;left:811px;top:88px;width:8px;height:2px;background:#9cdcfe;opacity:0.42"></div>
<div style="position:absolute;left:819px;top:88px;width:1px;height:2px;background:#cccccc;opacity:0.42"></div>
<div style="position:absolute;left:820px;top:88px;width:5px;height:2px;background:#dcdcaa;opacity:0.42"></div>
<div style="position:absolute;left:825px;top:88px;width:1px;height:2px;background:#ffd700;opacity:0.42"></div>
<div style="position:absolute;left:826px;top:88px;width:5px;height:2px;background:#ce9178;opacity:0.42"></div>
<div style="position:absolute;left:832px;top:88px;width:19px;height:2px;background:#ce9178;opacity:0.42"></div>
<div style="position:absolute;left:851px;top:88px;width:1px;height:2px;background:#cccccc;opacity:0.42"></div>
<div style="position:absolute;left:852px;top:88px;width:4px;height:2px;background:#dcdcaa;opacity:0.42"></div>
<div style="position:absolute;left:856px;top:88px;width:1px;height:2px;background:#da70d6;opacity:0.42"></div>
<div style="position:absolute;left:857px;top:88px;width:1px;height:2px;background:#b5cea8;opacity:0.42"></div>
<div style="position:absolute;left:858px;top:88px;width:1px;height:2px;background:#cccccc;opacity:0.42"></div>
<div style="position:absolute;left:859px;top:88px;width:1px;height:2px;background:#b5cea8;opacity:0.42"></div>
<div style="position:absolute;left:860px;top:88px;width:1px;height:2px;background:#da70d6;opacity:0.42"></div>
<div style="position:absolute;left:861px;top:88px;width:1px;height:2px;background:#cccccc;opacity:0.42"></div>
<div style="position:absolute;left:862px;top:88px;width:12px;height:2px;background:#ce9178;opacity:0.42"></div>
<div style="position:absolute;left:874px;top:88px;width:1px;height:2px;background:#ffd700;opacity:0.42"></div>
<div style="position:absolute;left:875px;top:88px;width:1px;height:2px;background:#cccccc;opacity:0.42"></div>
<div style="position:absolute;left:811px;top:90px;width:8px;height:2px;background:#9cdcfe;opacity:0.42"></div>
<div style="position:absolute;left:819px;top:90px;width:1px;height:2px;background:#cccccc;opacity:0.42"></div>
<div style="position:absolute;left:820px;top:90px;width:5px;height:2px;background:#dcdcaa;opacity:0.42"></div>
<div style="position:absolute;left:825px;top:90px;width:1px;height:2px;background:#ffd700;opacity:0.42"></div>
<div style="position:absolute;left:826px;top:90px;width:5px;height:2px;background:#ce9178;opacity:0.42"></div>
<div style="position:absolute;left:832px;top:90px;width:25px;height:2px;background:#ce9178;opacity:0.42"></div>
<div style="position:absolute;left:857px;top:90px;width:1px;height:2px;background:#cccccc;opacity:0.42"></div>
<div style="position:absolute;left:858px;top:90px;width:4px;height:2px;background:#dcdcaa;opacity:0.42"></div>
<div style="position:absolute;left:862px;top:90px;width:1px;height:2px;background:#da70d6;opacity:0.42"></div>
<div style="position:absolute;left:863px;top:90px;width:1px;height:2px;background:#b5cea8;opacity:0.42"></div>
<div style="position:absolute;left:864px;top:90px;width:1px;height:2px;background:#cccccc;opacity:0.42"></div>
<div style="position:absolute;left:865px;top:90px;width:1px;height:2px;background:#b5cea8;opacity:0.42"></div>
<div style="position:absolute;left:866px;top:90px;width:1px;height:2px;background:#da70d6;opacity:0.42"></div>
<div style="position:absolute;left:867px;top:90px;width:1px;height:2px;background:#cccccc;opacity:0.42"></div>
<div style="position:absolute;left:868px;top:90px;width:12px;height:2px;background:#ce9178;opacity:0.42"></div>
<div style="position:absolute;left:880px;top:90px;width:1px;height:2px;background:#ffd700;opacity:0.42"></div>
<div style="position:absolute;left:881px;top:90px;width:1px;height:2px;background:#cccccc;opacity:0.42"></div>
<div style="position:absolute;left:807px;top:92px;width:2px;height:2px;background:#808080;opacity:0.42"></div>
<div style="position:absolute;left:809px;top:92px;width:6px;height:2px;background:#569cd6;opacity:0.42"></div>
<div style="position:absolute;left:815px;top:92px;width:1px;height:2px;background:#808080;opacity:0.42"></div>
<div style="position:absolute;left:803px;top:94px;width:2px;height:2px;background:#808080;opacity:0.42"></div>
<div style="position:absolute;left:805px;top:94px;width:4px;height:2px;background:#569cd6;opacity:0.42"></div>
<div style="position:absolute;left:809px;top:94px;width:1px;height:2px;background:#808080;opacity:0.42"></div>
<div style="position:absolute;left:803px;top:96px;width:2px;height:2px;background:#808080;opacity:0.42"></div>
<div style="position:absolute;left:805px;top:96px;width:4px;height:2px;background:#569cd6;opacity:0.42"></div>
<div style="position:absolute;left:809px;top:96px;width:1px;height:2px;background:#808080;opacity:0.42"></div>
<div style="position:absolute;left:898px;top:0;width:1px;height:918px;background:#121212"></div>
<div style="position:absolute;left:898px;top:0;width:12px;height:1px;background:#121212"></div>
<div style="position:absolute;left:899px;top:361px;width:11px;height:2px;background:#969696"></div>
</div>
<div style="position:absolute;left:961px;top:1010px;width:957px;height:22px;background:#181818;"></div>
<div style="position:absolute;left:961px;top:1010px;width:957px;height:1px;background:#2b2b2b;"></div>
<div style="position:absolute;left:961px;top:1031px;width:957px;height:1px;background:#7a7a7a;"></div>
<svg style="position:absolute;left:961px;top:1010px;" width="30" height="22" viewBox="0 0 30 22"><path d="M10.3 8.3 L14.4 12.9 L10.3 17.5 M19.8 4.1 L15.7 8.9 L19.8 13.5" fill="none" stroke="#cccccc" stroke-width="1.1"/></svg>
<svg style="position:absolute;left:1001px;top:1013px;" width="18" height="16" viewBox="0 0 18 16"><circle cx="3" cy="2.5" r="1.8" fill="none" stroke="#cccccc"/><circle cx="3" cy="13.5" r="1.8" fill="none" stroke="#cccccc"/><path d="M3 4.3 V11.7" stroke="#cccccc"/><path d="M7.5 6 V5 A2 2 0 0 1 11.5 5 V6" fill="none" stroke="#cccccc"/><circle cx="10.5" cy="11" r="4" fill="#cccccc"/><path d="M10.5 8.8 V13.2 M8.6 9.9 L12.4 12.1 M12.4 9.9 L8.6 12.1" stroke="#181818" stroke-width="0.8"/></svg>
<div style="position:absolute;left:1020px;top:1022.34px;line-height:0;font-family:'Liberation Sans',sans-serif;font-size:12px;font-weight:normal;color:#cccccc;white-space:pre;letter-spacing:-0.25px">main*</div>
<svg style="position:absolute;left:1057px;top:1012px;" width="18" height="18" viewBox="0 0 18 18"><path d="M5 13.5 H4 A3 3 0 0 1 3.5 7.5 A4.5 4.5 0 0 1 12.2 6.5 A3 3 0 0 1 14.5 8.5" fill="none" stroke="#cccccc" stroke-width="1.1"/><circle cx="11.5" cy="12.5" r="4" fill="#cccccc"/><path d="M11.5 14.5 V10.5 M9.8 12 L11.5 10.3 L13.2 12" fill="none" stroke="#181818" stroke-width="0.9"/></svg>
<svg style="position:absolute;left:1088px;top:1013px;" width="16" height="16" viewBox="0 0 16 16"><circle cx="8" cy="8" r="6.8" fill="none" stroke="#cccccc" stroke-width="1.1"/><path d="M5.3 5.3 L10.7 10.7 M10.7 5.3 L5.3 10.7" stroke="#cccccc" stroke-width="1.1"/></svg>
<div style="position:absolute;left:1108px;top:1022.34px;line-height:0;font-family:'Liberation Sans',sans-serif;font-size:12px;font-weight:normal;color:#cccccc;white-space:pre;letter-spacing:-0.25px">0</div>
<svg style="position:absolute;left:1118px;top:1013px;" width="16" height="16" viewBox="0 0 16 16"><path d="M8 1.5 L15 14.5 H1 Z" fill="none" stroke="#cccccc" stroke-width="1.1" stroke-linejoin="round"/><path d="M8 6 V10.5 M8 11.8 V13" stroke="#cccccc" stroke-width="1.2"/></svg>
<div style="position:absolute;left:1137px;top:1022.34px;line-height:0;font-family:'Liberation Sans',sans-serif;font-size:12px;font-weight:normal;color:#cccccc;white-space:pre;letter-spacing:-0.25px">0</div>
<div style="position:absolute;left:1323px;top:1022.34px;line-height:0;font-family:'Liberation Sans',sans-serif;font-size:12px;font-weight:normal;color:#cccccc;white-space:pre;letter-spacing:-0.25px">Ln 39, Col 20</div>
<div style="position:absolute;left:1407px;top:1022.34px;line-height:0;font-family:'Liberation Sans',sans-serif;font-size:12px;font-weight:normal;color:#cccccc;white-space:pre;letter-spacing:-0.25px">Spaces: 4</div>
<div style="position:absolute;left:1472px;top:1022.34px;line-height:0;font-family:'Liberation Sans',sans-serif;font-size:12px;font-weight:normal;color:#cccccc;white-space:pre;letter-spacing:-0.25px">UTF-8</div>
<div style="position:absolute;left:1519px;top:1022.34px;line-height:0;font-family:'Liberation Sans',sans-serif;font-size:12px;font-weight:normal;color:#cccccc;white-space:pre;letter-spacing:-0.25px">CRLF</div>
<svg style="position:absolute;left:1562px;top:1013px;" width="16" height="16" viewBox="0 0 16 16"><path d="M4.5 2 C3 2 3 3 3 4.5 V6.5 C3 7.5 2.5 8 1.5 8 C2.5 8 3 8.5 3 9.5 V11.5 C3 13 3 14 4.5 14 M10 2 C11.2 2 11.5 3 11.5 4.5 V7" fill="none" stroke="#cccccc" stroke-width="1.1"/><circle cx="11.5" cy="12" r="2.8" fill="none" stroke="#cccccc" stroke-width="1.1"/><path d="M10.4 10.9 L12.6 13.1 M12.6 10.9 L10.4 13.1" stroke="#cccccc" stroke-width="0.9"/></svg>
<div style="position:absolute;left:1584px;top:1022.34px;line-height:0;font-family:'Liberation Sans',sans-serif;font-size:12px;font-weight:normal;color:#cccccc;white-space:pre;letter-spacing:-0.25px">HTML</div>
<div style="position:absolute;left:1623px;top:1011px;width:99px;height:20px;background:#2d3035;"></div>
<svg style="position:absolute;left:1629px;top:1013px;" width="18" height="16" viewBox="0 0 18 16"><path d="M3 6.5 A3.3 3.3 0 1 1 8.5 3.8 A3.3 3.3 0 1 1 14 6.5" fill="none" stroke="#cccccc" stroke-width="1.2"/><path d="M2.2 6.8 V10.8 C2.2 13 5 14.5 8.5 14.5 C12 14.5 14.8 13 14.8 10.8 V6.8" fill="none" stroke="#cccccc" stroke-width="1.2"/><path d="M3 7.2 C5 8.2 7 7.6 8.5 6.2 C10 7.6 12 8.2 14 7.2" fill="none" stroke="#cccccc" stroke-width="1.1"/><path d="M6.6 9.6 V11.8 M10.4 9.6 V11.8" stroke="#cccccc" stroke-width="1.5"/></svg>
<div style="position:absolute;left:1650px;top:1022.34px;line-height:0;font-family:'Liberation Sans',sans-serif;font-size:12px;font-weight:normal;color:#cccccc;white-space:pre;letter-spacing:-0.25px">Finish Setup</div>
<svg style="position:absolute;left:1730px;top:1013px;" width="16" height="16" viewBox="0 0 16 16"><circle cx="8" cy="8" r="6.5" fill="none" stroke="#cccccc" stroke-width="1.1"/><path d="M3.4 12.6 L12.6 3.4" stroke="#cccccc" stroke-width="1.1"/></svg>
<div style="position:absolute;left:1750px;top:1022.34px;line-height:0;font-family:'Liberation Sans',sans-serif;font-size:12px;font-weight:normal;color:#cccccc;white-space:pre;letter-spacing:-0.25px">Port : 5500</div>
<svg style="position:absolute;left:1821px;top:1014px;" width="18" height="14" viewBox="0 0 18 14"><path d="M1 8 L4.5 11.5 L12 3 M6.5 11.5 L15 3" fill="none" stroke="#cccccc" stroke-width="1.1"/></svg>
<div style="position:absolute;left:1842px;top:1022.34px;line-height:0;font-family:'Liberation Sans',sans-serif;font-size:12px;font-weight:normal;color:#cccccc;white-space:pre;letter-spacing:-0.25px">Prettier</div>
<svg style="position:absolute;left:1896px;top:1012px;" width="18" height="18" viewBox="0 0 18 18"><path d="M8 2.5 A4.5 4.5 0 0 0 3.5 7 V11.5 L2 13.5 H14 L12.5 11.5 V7 A4.5 4.5 0 0 0 8 2.5 Z M6.5 15.5 H9.5" fill="none" stroke="#cccccc" stroke-width="1.1"/><circle cx="13" cy="4" r="2.8" fill="#ffffff"/></svg>
</body></html>
